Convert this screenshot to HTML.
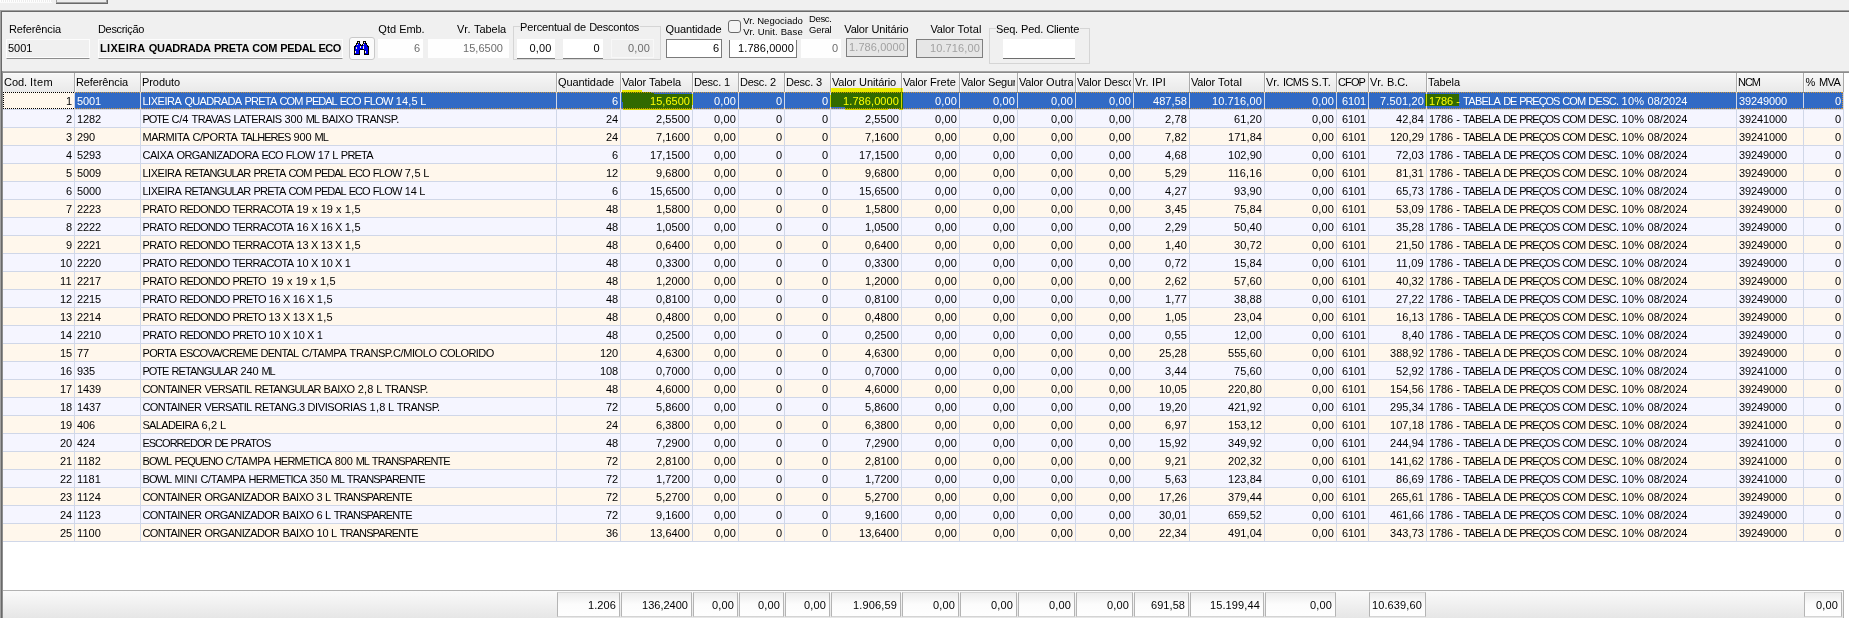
<!DOCTYPE html><html lang="pt-BR"><head><meta charset="utf-8"><title>Itens do Pedido</title><style>
*{box-sizing:border-box;margin:0;padding:0}
html,body{width:1849px;height:618px;overflow:hidden}
body{position:relative;background:#f0f0f0;font:11px "Liberation Sans", sans-serif;color:#000}
.a{position:absolute;white-space:pre}
.lb{position:absolute;white-space:pre;line-height:13px;height:13px;color:#000}
.in{position:absolute;white-space:pre;height:19px;line-height:19px;top:39px}
#grid{position:absolute;left:3px;top:73px;width:1846px;height:517px;background:#fff;overflow:hidden}
.hd{position:absolute;top:0;height:19px;line-height:18px;padding-left:0px;white-space:pre;overflow:hidden;
 background:linear-gradient(#fff 0,#f6f6f6 1.5px,#e9e9e9 100%);border-right:1px solid #aaaaaa;border-left:1px solid #fbfbfb}
.hd .t{display:block;overflow:hidden;margin-right:2px;height:19px}
.r{position:absolute;left:0;width:1841px;height:18px;border-bottom:1px solid #d0d7e8}
.r.o{background:#fff7ec}
.r.e{background:#f5f5ff}
.c{position:absolute;top:0;height:17px;line-height:19px;white-space:pre;overflow:hidden;border-right:1px solid #d0d7e8}
.c.l{padding-left:2px}
.c.r_{text-align:right;padding-right:2px}
.sel .c{background:#316ac5;color:#fff}
.ft{position:absolute;top:592px;height:25px;line-height:24px;text-align:right;padding-right:3px;white-space:pre;
 border:1px solid #b4b4b4;border-top-color:#d4d4d4;border-bottom-color:#d4d4d4;background:linear-gradient(#ebebeb 0%,#f4f4f4 25%,#fcfcfc 50%,#fefefe 100%);}
.hl{position:absolute;background:#ffff00;mix-blend-mode:multiply}
</style></head><body>
<div class="a" style="left:0;top:0;width:52px;height:3px;background:repeating-linear-gradient(90deg,#fff 0 1px,#ececec 1px 2px);border-bottom:1px solid #fbfbfb"></div>
<div class="a" style="left:56px;top:0;width:52px;height:4px;background:#696969"></div>
<div class="a" style="left:56px;top:0;width:51px;height:3px;background:#a0a0a0"></div>
<div class="a" style="left:57px;top:0;width:49px;height:2px;background:#ececec"></div>
<div class="a" style="left:0;top:10px;width:1849px;height:1px;background:#a0a0a0"></div>
<div class="a" style="left:0;top:11px;width:1849px;height:1px;background:#696969"></div>
<div class="a" style="left:0;top:10px;width:1px;height:608px;background:#a0a0a0"></div>
<div class="a" style="left:1px;top:11px;width:1px;height:607px;background:#696969"></div>
<div class="a" style="left:513px;top:26px;width:148px;height:34px;border:1px solid #d5d5d5"></div>
<div class="a" style="left:520px;top:22px;width:120px;height:10px;background:#f0f0f0"></div>
<div class="a" style="left:989px;top:28px;width:101px;height:36px;border:1px solid #d5d5d5"></div>
<div class="a" style="left:996px;top:24px;width:84px;height:10px;background:#f0f0f0"></div>
<div class="lb" style="top:22.6px;font-size:11px;left:9px;"><span style="letter-spacing:-0.12px">Referência</span></div>
<div class="lb" style="top:22.6px;font-size:11px;left:98px;"><span style="letter-spacing:-0.32px">Descrição</span></div>
<div class="lb" style="top:22.6px;font-size:11px;left:378.3px;"><span style="letter-spacing:0.09px">Qtd</span> <span style="letter-spacing:-0.17px">Emb.</span></div>
<div class="lb" style="top:22.6px;font-size:11px;left:457px;"><span style="letter-spacing:0.32px">Vr.</span> <span style="letter-spacing:-0.07px">Tabela</span></div>
<div class="lb" style="top:20.6px;font-size:11px;left:520px;"><span style="letter-spacing:-0.16px">Percentual</span> <span style="letter-spacing:-0.12px">de</span> <span style="letter-spacing:-0.22px">Descontos</span></div>
<div class="lb" style="top:22.6px;font-size:11px;left:665.5px;"><span style="letter-spacing:-0.09px">Quantidade</span></div>
<div class="lb" style="top:14.1px;font-size:9.5px;letter-spacing:0.013px;left:743.3px;">Vr. Negociado</div>
<div class="lb" style="top:25.1px;font-size:9.5px;letter-spacing:0.126px;left:743.3px;">Vr. Unit. Base</div>
<div class="lb" style="top:12.1px;font-size:9.5px;letter-spacing:-0.359px;left:809px;">Desc.</div>
<div class="lb" style="top:23.1px;font-size:9.5px;letter-spacing:-0.147px;left:809px;">Geral</div>
<div class="lb" style="top:22.6px;font-size:11px;left:844.3px;"><span style="letter-spacing:-0.17px">Valor</span> <span style="letter-spacing:-0.11px">Unitário</span></div>
<div class="lb" style="top:22.6px;font-size:11px;left:930.5px;"><span style="letter-spacing:-0.17px">Valor</span> <span style="letter-spacing:0.15px">Total</span></div>
<div class="lb" style="top:22.6px;font-size:11px;left:996px;"><span style="letter-spacing:-0.16px">Seq.</span> <span style="letter-spacing:-0.16px">Ped.</span> <span style="letter-spacing:-0.18px">Cliente</span></div>
<div class="in" style="left:6px;width:84px;padding-left:1px;background:#f0f0f0;border:1px solid #fdfdfd;border-bottom-color:#8c8c8c;box-shadow:inset 0 -1px 0 #fdfdfd;line-height:16px;height:20px">5001</div>
<div class="in" style="left:98px;width:245px;padding-left:1px;background:#f0f0f0;border:1px solid #fdfdfd;border-bottom-color:#8c8c8c;box-shadow:inset 0 -1px 0 #fdfdfd;line-height:16px;height:20px;font-weight:bold;overflow:hidden"><span style="letter-spacing:0.31px">LIXEIRA</span> <span style="letter-spacing:-0.25px">QUADRADA</span> <span style="letter-spacing:-0.23px">PRETA</span> <span style="letter-spacing:-0.23px">COM</span> <span style="letter-spacing:-0.41px">PEDAL</span> <span style="letter-spacing:-0.60px">ECO</span> <span style="letter-spacing:-0.17px">FLOW</span> <span style="letter-spacing:0.60px">14,5</span> <span style="letter-spacing:-0.59px">L</span></div>
<div class="a" style="left:349px;top:37px;width:26px;height:23px;background:#fbfbfb;border:1px solid #c9c9c9;border-radius:3px"></div>
<svg class="a" style="left:354px;top:41px" width="15" height="14" viewBox="0 0 15 14" shape-rendering="crispEdges"><rect x="3" y="0" width="3" height="1" fill="#000"/><rect x="9" y="0" width="3" height="1" fill="#000"/><rect x="3" y="1" width="1" height="1" fill="#000"/><rect x="4" y="1" width="1" height="1" fill="#f4f4c8"/><rect x="5" y="1" width="1" height="1" fill="#000"/><rect x="9" y="1" width="1" height="1" fill="#000"/><rect x="10" y="1" width="1" height="1" fill="#f4f4c8"/><rect x="11" y="1" width="1" height="1" fill="#000"/><rect x="2" y="2" width="2" height="1" fill="#000"/><rect x="4" y="2" width="1" height="1" fill="#0000f0"/><rect x="5" y="2" width="1" height="1" fill="#000"/><rect x="9" y="2" width="1" height="1" fill="#000"/><rect x="10" y="2" width="1" height="1" fill="#0000f0"/><rect x="11" y="2" width="2" height="1" fill="#000"/><rect x="2" y="3" width="1" height="1" fill="#000"/><rect x="3" y="3" width="1" height="1" fill="#f4f4c8"/><rect x="4" y="3" width="2" height="1" fill="#0000f0"/><rect x="6" y="3" width="1" height="1" fill="#000"/><rect x="8" y="3" width="1" height="1" fill="#000"/><rect x="9" y="3" width="1" height="1" fill="#f4f4c8"/><rect x="10" y="3" width="2" height="1" fill="#0000f0"/><rect x="12" y="3" width="1" height="1" fill="#000"/><rect x="1" y="4" width="1" height="1" fill="#000"/><rect x="2" y="4" width="4" height="1" fill="#0000f0"/><rect x="6" y="4" width="3" height="1" fill="#000"/><rect x="9" y="4" width="4" height="1" fill="#0000f0"/><rect x="13" y="4" width="1" height="1" fill="#000"/><rect x="0" y="5" width="2" height="1" fill="#000"/><rect x="2" y="5" width="4" height="1" fill="#0000f0"/><rect x="6" y="5" width="1" height="1" fill="#f4f4c8"/><rect x="7" y="5" width="2" height="1" fill="#0000f0"/><rect x="9" y="5" width="1" height="1" fill="#f4f4c8"/><rect x="10" y="5" width="3" height="1" fill="#0000f0"/><rect x="13" y="5" width="2" height="1" fill="#000"/><rect x="0" y="6" width="1" height="1" fill="#000"/><rect x="1" y="6" width="1" height="1" fill="#0000f0"/><rect x="2" y="6" width="1" height="1" fill="#f4f4c8"/><rect x="3" y="6" width="3" height="1" fill="#0000f0"/><rect x="6" y="6" width="1" height="1" fill="#f4f4c8"/><rect x="7" y="6" width="2" height="1" fill="#0000f0"/><rect x="9" y="6" width="1" height="1" fill="#f4f4c8"/><rect x="10" y="6" width="4" height="1" fill="#0000f0"/><rect x="14" y="6" width="1" height="1" fill="#000"/><rect x="0" y="7" width="1" height="1" fill="#000"/><rect x="1" y="7" width="1" height="1" fill="#0000f0"/><rect x="2" y="7" width="1" height="1" fill="#f4f4c8"/><rect x="3" y="7" width="6" height="1" fill="#0000f0"/><rect x="9" y="7" width="1" height="1" fill="#f4f4c8"/><rect x="10" y="7" width="4" height="1" fill="#0000f0"/><rect x="14" y="7" width="1" height="1" fill="#000"/><rect x="0" y="8" width="1" height="1" fill="#000"/><rect x="1" y="8" width="5" height="1" fill="#0000f0"/><rect x="6" y="8" width="4" height="1" fill="#000"/><rect x="10" y="8" width="4" height="1" fill="#0000f0"/><rect x="14" y="8" width="1" height="1" fill="#000"/><rect x="0" y="9" width="1" height="1" fill="#000"/><rect x="1" y="9" width="4" height="1" fill="#0000f0"/><rect x="5" y="9" width="1" height="1" fill="#000"/><rect x="10" y="9" width="1" height="1" fill="#000"/><rect x="11" y="9" width="3" height="1" fill="#0000f0"/><rect x="14" y="9" width="1" height="1" fill="#000"/><rect x="0" y="10" width="1" height="1" fill="#000"/><rect x="1" y="10" width="1" height="1" fill="#f4f4c8"/><rect x="2" y="10" width="3" height="1" fill="#0000f0"/><rect x="5" y="10" width="1" height="1" fill="#000"/><rect x="10" y="10" width="1" height="1" fill="#000"/><rect x="11" y="10" width="1" height="1" fill="#f4f4c8"/><rect x="12" y="10" width="2" height="1" fill="#0000f0"/><rect x="14" y="10" width="1" height="1" fill="#000"/><rect x="0" y="11" width="1" height="1" fill="#000"/><rect x="1" y="11" width="1" height="1" fill="#f4f4c8"/><rect x="2" y="11" width="3" height="1" fill="#0000f0"/><rect x="5" y="11" width="1" height="1" fill="#000"/><rect x="10" y="11" width="1" height="1" fill="#000"/><rect x="11" y="11" width="1" height="1" fill="#f4f4c8"/><rect x="12" y="11" width="2" height="1" fill="#0000f0"/><rect x="14" y="11" width="1" height="1" fill="#000"/><rect x="0" y="12" width="1" height="1" fill="#000"/><rect x="1" y="12" width="4" height="1" fill="#0000f0"/><rect x="5" y="12" width="1" height="1" fill="#000"/><rect x="10" y="12" width="1" height="1" fill="#000"/><rect x="11" y="12" width="3" height="1" fill="#0000f0"/><rect x="14" y="12" width="1" height="1" fill="#000"/><rect x="0" y="13" width="6" height="1" fill="#000"/><rect x="10" y="13" width="5" height="1" fill="#000"/></svg>
<div class="in" style="left:378px;width:45px;top:39px;height:19px;line-height:18px;text-align:right;padding-right:3px;color:#6d6d6d;background:#fefefe"><span style="letter-spacing:-0.12px">6</span></div>
<div class="in" style="left:428px;width:81px;top:39px;height:19px;line-height:18px;text-align:right;padding-right:6px;color:#6d6d6d;background:#fefefe"><span style="letter-spacing:0.03px">15,6500</span></div>
<div class="in" style="left:517px;width:38px;top:39px;height:20px;line-height:18px;text-align:right;padding-right:3.5px;color:#000;background:#fff;border-bottom:1px solid #7a7a7a"><span style="letter-spacing:0.14px">0,00</span></div>
<div class="in" style="left:563px;width:40px;top:39px;height:20px;line-height:18px;text-align:right;padding-right:3.5px;color:#000;background:#fff;border-bottom:1px solid #7a7a7a"><span style="letter-spacing:-0.12px">0</span></div>
<div class="in" style="left:611px;width:43px;top:39px;height:19px;line-height:16px;text-align:right;padding-right:3px;color:#6d6d6d;background:#f0f0f0;border:1px solid #f8f8f8"><span style="letter-spacing:0.14px">0,00</span></div>
<div class="in" style="left:666px;width:56px;top:39px;height:19px;line-height:16px;text-align:right;padding-right:2px;color:#000;background:#fff;border:1px solid #7a7a7a"><span style="letter-spacing:-0.12px">6</span></div>
<div class="in" style="left:729px;width:68px;top:40px;height:18px;line-height:16px;text-align:right;padding-right:2px;color:#000;background:#fff;border:1px solid #7a7a7a;border-top:none"><span style="letter-spacing:0.09px">1.786,0000</span></div>
<div class="in" style="left:801px;width:40px;top:39px;height:19px;line-height:18px;text-align:right;padding-right:3px;color:#6d6d6d;background:#fefefe"><span style="letter-spacing:-0.12px">0</span></div>
<div class="in" style="left:846px;width:62px;top:38px;height:19px;line-height:16px;text-align:right;padding-right:2px;color:#a2a2a2;background:#e6e6e6;border:1px solid #7f7f7f"><span style="letter-spacing:0.09px">1.786,0000</span></div>
<div class="in" style="left:916px;width:67px;top:39px;height:19px;line-height:16px;text-align:right;padding-right:2px;color:#a2a2a2;background:#e6e6e6;border:1px solid #7f7f7f"><span style="letter-spacing:0.12px">10.716,00</span></div>
<div class="in" style="left:1003px;width:72px;top:39px;height:20px;line-height:18px;text-align:right;padding-right:2px;color:#000;background:#fff;border-bottom:1px solid #6d6d6d"></div>
<div class="a" style="left:728px;top:20px;width:13px;height:13px;background:#f4f4f4;border:1px solid #6a6a6a;border-radius:3px"></div>
<div class="a" style="left:2px;top:71px;width:1847px;height:1px;background:#a4a4a4"></div>
<div class="a" style="left:2px;top:72px;width:1847px;height:1px;background:#8c8c8c"></div>
<div class="a" style="left:2px;top:71px;width:1px;height:547px;background:#8e8e8e"></div>
<div id="grid">
<div class="hd" style="left:0px;width:72px"><span class="t"><span style="letter-spacing:-0.06px">Cod.</span> <span style="letter-spacing:0.40px">Item</span></span></div>
<div class="hd" style="left:72px;width:66px"><span class="t"><span style="letter-spacing:-0.12px">Referência</span></span></div>
<div class="hd" style="left:138px;width:416px"><span class="t"><span style="letter-spacing:-0.08px">Produto</span></span></div>
<div class="hd" style="left:554px;width:64px"><span class="t"><span style="letter-spacing:-0.09px">Quantidade</span></span></div>
<div class="hd" style="left:618px;width:72px"><span class="t"><span style="letter-spacing:-0.17px">Valor</span> <span style="letter-spacing:-0.07px">Tabela</span></span></div>
<div class="hd" style="left:690px;width:46px"><span class="t"><span style="letter-spacing:-0.23px">Desc.</span> <span style="letter-spacing:-0.12px">1</span></span></div>
<div class="hd" style="left:736px;width:46px"><span class="t"><span style="letter-spacing:-0.23px">Desc.</span> <span style="letter-spacing:-0.12px">2</span></span></div>
<div class="hd" style="left:782px;width:46px"><span class="t"><span style="letter-spacing:-0.23px">Desc.</span> <span style="letter-spacing:-0.12px">3</span></span></div>
<div class="hd" style="left:828px;width:71px"><span class="t"><span style="letter-spacing:-0.17px">Valor</span> <span style="letter-spacing:-0.11px">Unitário</span></span></div>
<div class="hd" style="left:899px;width:58px"><span class="t"><span style="letter-spacing:-0.17px">Valor</span> <span style="letter-spacing:0.06px">Frete</span></span></div>
<div class="hd" style="left:957px;width:58px"><span class="t"><span style="letter-spacing:-0.17px">Valor</span> <span style="letter-spacing:-0.25px">Seguro</span></span></div>
<div class="hd" style="left:1015px;width:58px"><span class="t"><span style="letter-spacing:-0.17px">Valor</span> <span style="letter-spacing:-0.00px">Outras</span></span></div>
<div class="hd" style="left:1073px;width:58px"><span class="t"><span style="letter-spacing:-0.17px">Valor</span> <span style="letter-spacing:-0.19px">Desconto</span></span></div>
<div class="hd" style="left:1131px;width:56px"><span class="t"><span style="letter-spacing:0.32px">Vr.</span> <span style="letter-spacing:0.18px">IPI</span></span></div>
<div class="hd" style="left:1187px;width:75px"><span class="t"><span style="letter-spacing:-0.17px">Valor</span> <span style="letter-spacing:0.15px">Total</span></span></div>
<div class="hd" style="left:1262px;width:72px"><span class="t"><span style="letter-spacing:0.32px">Vr.</span> <span style="letter-spacing:-0.62px">ICMS</span> <span style="letter-spacing:0.26px">S.T.</span></span></div>
<div class="hd" style="left:1334px;width:32px"><span class="t"><span style="letter-spacing:-0.89px">CFOP</span></span></div>
<div class="hd" style="left:1366px;width:58px"><span class="t"><span style="letter-spacing:0.32px">Vr.</span> <span style="letter-spacing:-0.10px">B.C.</span></span></div>
<div class="hd" style="left:1424px;width:310px"><span class="t"><span style="letter-spacing:-0.07px">Tabela</span></span></div>
<div class="hd" style="left:1734px;width:67px"><span class="t"><span style="letter-spacing:-1.02px">NCM</span></span></div>
<div class="hd" style="left:1801px;width:40px"><span class="t"><span style="letter-spacing:0.61px;margin-left:0.61px">%</span> <span style="letter-spacing:-0.68px">MVA</span></span></div>
<div class="r o sel" style="top:19px">
<div class="c r_" style="left:0px;width:72px;background:#fff7ec;color:#000;"><span style="letter-spacing:-0.12px">1</span></div>
<div class="c l" style="left:72px;width:66px;"><span style="letter-spacing:-0.12px">5001</span></div>
<div class="c l" style="left:138px;width:416px;padding-left:1.4px;"><span style="letter-spacing:-0.46px">LIXEIRA</span> <span style="letter-spacing:-0.67px">QUADRADA</span> <span style="letter-spacing:-0.77px">PRETA</span> <span style="letter-spacing:-0.89px">COM</span> <span style="letter-spacing:-1.02px">PEDAL</span> <span style="letter-spacing:-0.95px">ECO</span> <span style="letter-spacing:-0.70px">FLOW</span> <span style="letter-spacing:0.14px">14,5</span> <span style="letter-spacing:-0.56px;margin-left:-0.56px">L</span></div>
<div class="c r_" style="left:554px;width:64px;"><span style="letter-spacing:-0.12px">6</span></div>
<div class="c r_" style="left:618px;width:72px;"><span style="letter-spacing:0.03px">15,6500</span></div>
<div class="c r_" style="left:690px;width:46px;"><span style="letter-spacing:0.14px">0,00</span></div>
<div class="c r_" style="left:736px;width:46px;"><span style="letter-spacing:-0.12px">0</span></div>
<div class="c r_" style="left:782px;width:46px;"><span style="letter-spacing:-0.12px">0</span></div>
<div class="c r_" style="left:828px;width:71px;"><span style="letter-spacing:0.09px">1.786,0000</span></div>
<div class="c r_" style="left:899px;width:58px;"><span style="letter-spacing:0.14px">0,00</span></div>
<div class="c r_" style="left:957px;width:58px;"><span style="letter-spacing:0.14px">0,00</span></div>
<div class="c r_" style="left:1015px;width:58px;"><span style="letter-spacing:0.14px">0,00</span></div>
<div class="c r_" style="left:1073px;width:58px;"><span style="letter-spacing:0.14px">0,00</span></div>
<div class="c r_" style="left:1131px;width:56px;"><span style="letter-spacing:0.06px">487,58</span></div>
<div class="c r_" style="left:1187px;width:75px;"><span style="letter-spacing:0.12px">10.716,00</span></div>
<div class="c r_" style="left:1262px;width:72px;"><span style="letter-spacing:0.14px">0,00</span></div>
<div class="c r_" style="left:1334px;width:32px;"><span style="letter-spacing:-0.12px">6101</span></div>
<div class="c r_" style="left:1366px;width:58px;"><span style="letter-spacing:0.15px">7.501,20</span></div>
<div class="c l" style="left:1424px;width:310px;padding-left:2px;"><span style="letter-spacing:-0.12px">1786</span> <span style="letter-spacing:0.16px;margin-left:0.16px">-</span> <span style="letter-spacing:-0.73px">TABELA</span> <span style="letter-spacing:-1.14px">DE</span> <span style="letter-spacing:-1.08px">PREÇOS</span> <span style="letter-spacing:-0.89px">COM</span> <span style="letter-spacing:-0.72px">DESC.</span> <span style="letter-spacing:0.32px">10%</span> <span style="letter-spacing:0.03px">08/2024</span></div>
<div class="c l" style="left:1734px;width:67px;"><span style="letter-spacing:-0.12px">39249000</span></div>
<div class="c r_" style="left:1801px;width:40px;"><span style="letter-spacing:-0.12px">0</span></div>
</div>
<div class="r e" style="top:37px">
<div class="c r_" style="left:0px;width:72px;"><span style="letter-spacing:-0.12px">2</span></div>
<div class="c l" style="left:72px;width:66px;"><span style="letter-spacing:-0.12px">1282</span></div>
<div class="c l" style="left:138px;width:416px;padding-left:1.4px;"><span style="letter-spacing:-0.99px">POTE</span> <span style="letter-spacing:-0.04px">C/4</span> <span style="letter-spacing:-0.57px">TRAVAS</span> <span style="letter-spacing:-0.55px">LATERAIS</span> <span style="letter-spacing:-0.12px">300</span> <span style="letter-spacing:-1.14px">ML</span> <span style="letter-spacing:-0.53px">BAIXO</span> <span style="letter-spacing:-0.47px">TRANSP.</span></div>
<div class="c r_" style="left:554px;width:64px;"><span style="letter-spacing:-0.12px">24</span></div>
<div class="c r_" style="left:618px;width:72px;"><span style="letter-spacing:0.06px">2,5500</span></div>
<div class="c r_" style="left:690px;width:46px;"><span style="letter-spacing:0.14px">0,00</span></div>
<div class="c r_" style="left:736px;width:46px;"><span style="letter-spacing:-0.12px">0</span></div>
<div class="c r_" style="left:782px;width:46px;"><span style="letter-spacing:-0.12px">0</span></div>
<div class="c r_" style="left:828px;width:71px;"><span style="letter-spacing:0.06px">2,5500</span></div>
<div class="c r_" style="left:899px;width:58px;"><span style="letter-spacing:0.14px">0,00</span></div>
<div class="c r_" style="left:957px;width:58px;"><span style="letter-spacing:0.14px">0,00</span></div>
<div class="c r_" style="left:1015px;width:58px;"><span style="letter-spacing:0.14px">0,00</span></div>
<div class="c r_" style="left:1073px;width:58px;"><span style="letter-spacing:0.14px">0,00</span></div>
<div class="c r_" style="left:1131px;width:56px;"><span style="letter-spacing:0.14px">2,78</span></div>
<div class="c r_" style="left:1187px;width:75px;"><span style="letter-spacing:0.09px">61,20</span></div>
<div class="c r_" style="left:1262px;width:72px;"><span style="letter-spacing:0.14px">0,00</span></div>
<div class="c r_" style="left:1334px;width:32px;"><span style="letter-spacing:-0.12px">6101</span></div>
<div class="c r_" style="left:1366px;width:58px;"><span style="letter-spacing:0.09px">42,84</span></div>
<div class="c l" style="left:1424px;width:310px;padding-left:2px;"><span style="letter-spacing:-0.12px">1786</span> <span style="letter-spacing:0.16px;margin-left:0.16px">-</span> <span style="letter-spacing:-0.73px">TABELA</span> <span style="letter-spacing:-1.14px">DE</span> <span style="letter-spacing:-1.08px">PREÇOS</span> <span style="letter-spacing:-0.89px">COM</span> <span style="letter-spacing:-0.72px">DESC.</span> <span style="letter-spacing:0.32px">10%</span> <span style="letter-spacing:0.03px">08/2024</span></div>
<div class="c l" style="left:1734px;width:67px;"><span style="letter-spacing:-0.12px">39241000</span></div>
<div class="c r_" style="left:1801px;width:40px;"><span style="letter-spacing:-0.12px">0</span></div>
</div>
<div class="r o" style="top:55px">
<div class="c r_" style="left:0px;width:72px;"><span style="letter-spacing:-0.12px">3</span></div>
<div class="c l" style="left:72px;width:66px;"><span style="letter-spacing:-0.12px">290</span></div>
<div class="c l" style="left:138px;width:416px;padding-left:1.4px;"><span style="letter-spacing:-0.42px">MARMITA</span> <span style="letter-spacing:-0.41px">C/PORTA</span> <span style="letter-spacing:-0.91px">TALHERES</span> <span style="letter-spacing:-0.12px">900</span> <span style="letter-spacing:-1.14px">ML</span></div>
<div class="c r_" style="left:554px;width:64px;"><span style="letter-spacing:-0.12px">24</span></div>
<div class="c r_" style="left:618px;width:72px;"><span style="letter-spacing:0.06px">7,1600</span></div>
<div class="c r_" style="left:690px;width:46px;"><span style="letter-spacing:0.14px">0,00</span></div>
<div class="c r_" style="left:736px;width:46px;"><span style="letter-spacing:-0.12px">0</span></div>
<div class="c r_" style="left:782px;width:46px;"><span style="letter-spacing:-0.12px">0</span></div>
<div class="c r_" style="left:828px;width:71px;"><span style="letter-spacing:0.06px">7,1600</span></div>
<div class="c r_" style="left:899px;width:58px;"><span style="letter-spacing:0.14px">0,00</span></div>
<div class="c r_" style="left:957px;width:58px;"><span style="letter-spacing:0.14px">0,00</span></div>
<div class="c r_" style="left:1015px;width:58px;"><span style="letter-spacing:0.14px">0,00</span></div>
<div class="c r_" style="left:1073px;width:58px;"><span style="letter-spacing:0.14px">0,00</span></div>
<div class="c r_" style="left:1131px;width:56px;"><span style="letter-spacing:0.14px">7,82</span></div>
<div class="c r_" style="left:1187px;width:75px;"><span style="letter-spacing:0.06px">171,84</span></div>
<div class="c r_" style="left:1262px;width:72px;"><span style="letter-spacing:0.14px">0,00</span></div>
<div class="c r_" style="left:1334px;width:32px;"><span style="letter-spacing:-0.12px">6101</span></div>
<div class="c r_" style="left:1366px;width:58px;"><span style="letter-spacing:0.06px">120,29</span></div>
<div class="c l" style="left:1424px;width:310px;padding-left:2px;"><span style="letter-spacing:-0.12px">1786</span> <span style="letter-spacing:0.16px;margin-left:0.16px">-</span> <span style="letter-spacing:-0.73px">TABELA</span> <span style="letter-spacing:-1.14px">DE</span> <span style="letter-spacing:-1.08px">PREÇOS</span> <span style="letter-spacing:-0.89px">COM</span> <span style="letter-spacing:-0.72px">DESC.</span> <span style="letter-spacing:0.32px">10%</span> <span style="letter-spacing:0.03px">08/2024</span></div>
<div class="c l" style="left:1734px;width:67px;"><span style="letter-spacing:-0.12px">39241000</span></div>
<div class="c r_" style="left:1801px;width:40px;"><span style="letter-spacing:-0.12px">0</span></div>
</div>
<div class="r e" style="top:73px">
<div class="c r_" style="left:0px;width:72px;"><span style="letter-spacing:-0.12px">4</span></div>
<div class="c l" style="left:72px;width:66px;"><span style="letter-spacing:-0.12px">5293</span></div>
<div class="c l" style="left:138px;width:416px;padding-left:1.4px;"><span style="letter-spacing:-0.40px">CAIXA</span> <span style="letter-spacing:-0.60px">ORGANIZADORA</span> <span style="letter-spacing:-0.95px">ECO</span> <span style="letter-spacing:-0.70px">FLOW</span> <span style="letter-spacing:-0.12px">17</span> <span style="letter-spacing:-0.56px;margin-left:-0.56px">L</span> <span style="letter-spacing:-0.77px">PRETA</span></div>
<div class="c r_" style="left:554px;width:64px;"><span style="letter-spacing:-0.12px">6</span></div>
<div class="c r_" style="left:618px;width:72px;"><span style="letter-spacing:0.03px">17,1500</span></div>
<div class="c r_" style="left:690px;width:46px;"><span style="letter-spacing:0.14px">0,00</span></div>
<div class="c r_" style="left:736px;width:46px;"><span style="letter-spacing:-0.12px">0</span></div>
<div class="c r_" style="left:782px;width:46px;"><span style="letter-spacing:-0.12px">0</span></div>
<div class="c r_" style="left:828px;width:71px;"><span style="letter-spacing:0.03px">17,1500</span></div>
<div class="c r_" style="left:899px;width:58px;"><span style="letter-spacing:0.14px">0,00</span></div>
<div class="c r_" style="left:957px;width:58px;"><span style="letter-spacing:0.14px">0,00</span></div>
<div class="c r_" style="left:1015px;width:58px;"><span style="letter-spacing:0.14px">0,00</span></div>
<div class="c r_" style="left:1073px;width:58px;"><span style="letter-spacing:0.14px">0,00</span></div>
<div class="c r_" style="left:1131px;width:56px;"><span style="letter-spacing:0.14px">4,68</span></div>
<div class="c r_" style="left:1187px;width:75px;"><span style="letter-spacing:0.06px">102,90</span></div>
<div class="c r_" style="left:1262px;width:72px;"><span style="letter-spacing:0.14px">0,00</span></div>
<div class="c r_" style="left:1334px;width:32px;"><span style="letter-spacing:-0.12px">6101</span></div>
<div class="c r_" style="left:1366px;width:58px;"><span style="letter-spacing:0.09px">72,03</span></div>
<div class="c l" style="left:1424px;width:310px;padding-left:2px;"><span style="letter-spacing:-0.12px">1786</span> <span style="letter-spacing:0.16px;margin-left:0.16px">-</span> <span style="letter-spacing:-0.73px">TABELA</span> <span style="letter-spacing:-1.14px">DE</span> <span style="letter-spacing:-1.08px">PREÇOS</span> <span style="letter-spacing:-0.89px">COM</span> <span style="letter-spacing:-0.72px">DESC.</span> <span style="letter-spacing:0.32px">10%</span> <span style="letter-spacing:0.03px">08/2024</span></div>
<div class="c l" style="left:1734px;width:67px;"><span style="letter-spacing:-0.12px">39249000</span></div>
<div class="c r_" style="left:1801px;width:40px;"><span style="letter-spacing:-0.12px">0</span></div>
</div>
<div class="r o" style="top:91px">
<div class="c r_" style="left:0px;width:72px;"><span style="letter-spacing:-0.12px">5</span></div>
<div class="c l" style="left:72px;width:66px;"><span style="letter-spacing:-0.12px">5009</span></div>
<div class="c l" style="left:138px;width:416px;padding-left:1.4px;"><span style="letter-spacing:-0.46px">LIXEIRA</span> <span style="letter-spacing:-0.84px">RETANGULAR</span> <span style="letter-spacing:-0.77px">PRETA</span> <span style="letter-spacing:-0.89px">COM</span> <span style="letter-spacing:-1.02px">PEDAL</span> <span style="letter-spacing:-0.95px">ECO</span> <span style="letter-spacing:-0.70px">FLOW</span> <span style="letter-spacing:0.23px">7,5</span> <span style="letter-spacing:-0.56px;margin-left:-0.56px">L</span></div>
<div class="c r_" style="left:554px;width:64px;"><span style="letter-spacing:-0.12px">12</span></div>
<div class="c r_" style="left:618px;width:72px;"><span style="letter-spacing:0.06px">9,6800</span></div>
<div class="c r_" style="left:690px;width:46px;"><span style="letter-spacing:0.14px">0,00</span></div>
<div class="c r_" style="left:736px;width:46px;"><span style="letter-spacing:-0.12px">0</span></div>
<div class="c r_" style="left:782px;width:46px;"><span style="letter-spacing:-0.12px">0</span></div>
<div class="c r_" style="left:828px;width:71px;"><span style="letter-spacing:0.06px">9,6800</span></div>
<div class="c r_" style="left:899px;width:58px;"><span style="letter-spacing:0.14px">0,00</span></div>
<div class="c r_" style="left:957px;width:58px;"><span style="letter-spacing:0.14px">0,00</span></div>
<div class="c r_" style="left:1015px;width:58px;"><span style="letter-spacing:0.14px">0,00</span></div>
<div class="c r_" style="left:1073px;width:58px;"><span style="letter-spacing:0.14px">0,00</span></div>
<div class="c r_" style="left:1131px;width:56px;"><span style="letter-spacing:0.14px">5,29</span></div>
<div class="c r_" style="left:1187px;width:75px;"><span style="letter-spacing:0.20px">116,16</span></div>
<div class="c r_" style="left:1262px;width:72px;"><span style="letter-spacing:0.14px">0,00</span></div>
<div class="c r_" style="left:1334px;width:32px;"><span style="letter-spacing:-0.12px">6101</span></div>
<div class="c r_" style="left:1366px;width:58px;"><span style="letter-spacing:0.09px">81,31</span></div>
<div class="c l" style="left:1424px;width:310px;padding-left:2px;"><span style="letter-spacing:-0.12px">1786</span> <span style="letter-spacing:0.16px;margin-left:0.16px">-</span> <span style="letter-spacing:-0.73px">TABELA</span> <span style="letter-spacing:-1.14px">DE</span> <span style="letter-spacing:-1.08px">PREÇOS</span> <span style="letter-spacing:-0.89px">COM</span> <span style="letter-spacing:-0.72px">DESC.</span> <span style="letter-spacing:0.32px">10%</span> <span style="letter-spacing:0.03px">08/2024</span></div>
<div class="c l" style="left:1734px;width:67px;"><span style="letter-spacing:-0.12px">39249000</span></div>
<div class="c r_" style="left:1801px;width:40px;"><span style="letter-spacing:-0.12px">0</span></div>
</div>
<div class="r e" style="top:109px">
<div class="c r_" style="left:0px;width:72px;"><span style="letter-spacing:-0.12px">6</span></div>
<div class="c l" style="left:72px;width:66px;"><span style="letter-spacing:-0.12px">5000</span></div>
<div class="c l" style="left:138px;width:416px;padding-left:1.4px;"><span style="letter-spacing:-0.46px">LIXEIRA</span> <span style="letter-spacing:-0.84px">RETANGULAR</span> <span style="letter-spacing:-0.77px">PRETA</span> <span style="letter-spacing:-0.89px">COM</span> <span style="letter-spacing:-1.02px">PEDAL</span> <span style="letter-spacing:-0.95px">ECO</span> <span style="letter-spacing:-0.70px">FLOW</span> <span style="letter-spacing:-0.12px">14</span> <span style="letter-spacing:-0.56px;margin-left:-0.56px">L</span></div>
<div class="c r_" style="left:554px;width:64px;"><span style="letter-spacing:-0.12px">6</span></div>
<div class="c r_" style="left:618px;width:72px;"><span style="letter-spacing:0.03px">15,6500</span></div>
<div class="c r_" style="left:690px;width:46px;"><span style="letter-spacing:0.14px">0,00</span></div>
<div class="c r_" style="left:736px;width:46px;"><span style="letter-spacing:-0.12px">0</span></div>
<div class="c r_" style="left:782px;width:46px;"><span style="letter-spacing:-0.12px">0</span></div>
<div class="c r_" style="left:828px;width:71px;"><span style="letter-spacing:0.03px">15,6500</span></div>
<div class="c r_" style="left:899px;width:58px;"><span style="letter-spacing:0.14px">0,00</span></div>
<div class="c r_" style="left:957px;width:58px;"><span style="letter-spacing:0.14px">0,00</span></div>
<div class="c r_" style="left:1015px;width:58px;"><span style="letter-spacing:0.14px">0,00</span></div>
<div class="c r_" style="left:1073px;width:58px;"><span style="letter-spacing:0.14px">0,00</span></div>
<div class="c r_" style="left:1131px;width:56px;"><span style="letter-spacing:0.14px">4,27</span></div>
<div class="c r_" style="left:1187px;width:75px;"><span style="letter-spacing:0.09px">93,90</span></div>
<div class="c r_" style="left:1262px;width:72px;"><span style="letter-spacing:0.14px">0,00</span></div>
<div class="c r_" style="left:1334px;width:32px;"><span style="letter-spacing:-0.12px">6101</span></div>
<div class="c r_" style="left:1366px;width:58px;"><span style="letter-spacing:0.09px">65,73</span></div>
<div class="c l" style="left:1424px;width:310px;padding-left:2px;"><span style="letter-spacing:-0.12px">1786</span> <span style="letter-spacing:0.16px;margin-left:0.16px">-</span> <span style="letter-spacing:-0.73px">TABELA</span> <span style="letter-spacing:-1.14px">DE</span> <span style="letter-spacing:-1.08px">PREÇOS</span> <span style="letter-spacing:-0.89px">COM</span> <span style="letter-spacing:-0.72px">DESC.</span> <span style="letter-spacing:0.32px">10%</span> <span style="letter-spacing:0.03px">08/2024</span></div>
<div class="c l" style="left:1734px;width:67px;"><span style="letter-spacing:-0.12px">39249000</span></div>
<div class="c r_" style="left:1801px;width:40px;"><span style="letter-spacing:-0.12px">0</span></div>
</div>
<div class="r o" style="top:127px">
<div class="c r_" style="left:0px;width:72px;"><span style="letter-spacing:-0.12px">7</span></div>
<div class="c l" style="left:72px;width:66px;"><span style="letter-spacing:-0.12px">2223</span></div>
<div class="c l" style="left:138px;width:416px;padding-left:1.4px;"><span style="letter-spacing:-0.58px">PRATO</span> <span style="letter-spacing:-0.89px">REDONDO</span> <span style="letter-spacing:-0.67px">TERRACOTA</span> <span style="letter-spacing:-0.12px">19</span> <span style="letter-spacing:0.25px;margin-left:0.25px">x</span> <span style="letter-spacing:-0.12px">19</span> <span style="letter-spacing:0.25px;margin-left:0.25px">x</span> <span style="letter-spacing:0.23px">1,5</span></div>
<div class="c r_" style="left:554px;width:64px;"><span style="letter-spacing:-0.12px">48</span></div>
<div class="c r_" style="left:618px;width:72px;"><span style="letter-spacing:0.06px">1,5800</span></div>
<div class="c r_" style="left:690px;width:46px;"><span style="letter-spacing:0.14px">0,00</span></div>
<div class="c r_" style="left:736px;width:46px;"><span style="letter-spacing:-0.12px">0</span></div>
<div class="c r_" style="left:782px;width:46px;"><span style="letter-spacing:-0.12px">0</span></div>
<div class="c r_" style="left:828px;width:71px;"><span style="letter-spacing:0.06px">1,5800</span></div>
<div class="c r_" style="left:899px;width:58px;"><span style="letter-spacing:0.14px">0,00</span></div>
<div class="c r_" style="left:957px;width:58px;"><span style="letter-spacing:0.14px">0,00</span></div>
<div class="c r_" style="left:1015px;width:58px;"><span style="letter-spacing:0.14px">0,00</span></div>
<div class="c r_" style="left:1073px;width:58px;"><span style="letter-spacing:0.14px">0,00</span></div>
<div class="c r_" style="left:1131px;width:56px;"><span style="letter-spacing:0.14px">3,45</span></div>
<div class="c r_" style="left:1187px;width:75px;"><span style="letter-spacing:0.09px">75,84</span></div>
<div class="c r_" style="left:1262px;width:72px;"><span style="letter-spacing:0.14px">0,00</span></div>
<div class="c r_" style="left:1334px;width:32px;"><span style="letter-spacing:-0.12px">6101</span></div>
<div class="c r_" style="left:1366px;width:58px;"><span style="letter-spacing:0.09px">53,09</span></div>
<div class="c l" style="left:1424px;width:310px;padding-left:2px;"><span style="letter-spacing:-0.12px">1786</span> <span style="letter-spacing:0.16px;margin-left:0.16px">-</span> <span style="letter-spacing:-0.73px">TABELA</span> <span style="letter-spacing:-1.14px">DE</span> <span style="letter-spacing:-1.08px">PREÇOS</span> <span style="letter-spacing:-0.89px">COM</span> <span style="letter-spacing:-0.72px">DESC.</span> <span style="letter-spacing:0.32px">10%</span> <span style="letter-spacing:0.03px">08/2024</span></div>
<div class="c l" style="left:1734px;width:67px;"><span style="letter-spacing:-0.12px">39249000</span></div>
<div class="c r_" style="left:1801px;width:40px;"><span style="letter-spacing:-0.12px">0</span></div>
</div>
<div class="r e" style="top:145px">
<div class="c r_" style="left:0px;width:72px;"><span style="letter-spacing:-0.12px">8</span></div>
<div class="c l" style="left:72px;width:66px;"><span style="letter-spacing:-0.12px">2222</span></div>
<div class="c l" style="left:138px;width:416px;padding-left:1.4px;"><span style="letter-spacing:-0.58px">PRATO</span> <span style="letter-spacing:-0.89px">REDONDO</span> <span style="letter-spacing:-0.67px">TERRACOTA</span> <span style="letter-spacing:-0.12px">16</span> <span style="letter-spacing:-0.67px;margin-left:-0.67px">X</span> <span style="letter-spacing:-0.12px">16</span> <span style="letter-spacing:-0.67px;margin-left:-0.67px">X</span> <span style="letter-spacing:0.23px">1,5</span></div>
<div class="c r_" style="left:554px;width:64px;"><span style="letter-spacing:-0.12px">48</span></div>
<div class="c r_" style="left:618px;width:72px;"><span style="letter-spacing:0.06px">1,0500</span></div>
<div class="c r_" style="left:690px;width:46px;"><span style="letter-spacing:0.14px">0,00</span></div>
<div class="c r_" style="left:736px;width:46px;"><span style="letter-spacing:-0.12px">0</span></div>
<div class="c r_" style="left:782px;width:46px;"><span style="letter-spacing:-0.12px">0</span></div>
<div class="c r_" style="left:828px;width:71px;"><span style="letter-spacing:0.06px">1,0500</span></div>
<div class="c r_" style="left:899px;width:58px;"><span style="letter-spacing:0.14px">0,00</span></div>
<div class="c r_" style="left:957px;width:58px;"><span style="letter-spacing:0.14px">0,00</span></div>
<div class="c r_" style="left:1015px;width:58px;"><span style="letter-spacing:0.14px">0,00</span></div>
<div class="c r_" style="left:1073px;width:58px;"><span style="letter-spacing:0.14px">0,00</span></div>
<div class="c r_" style="left:1131px;width:56px;"><span style="letter-spacing:0.14px">2,29</span></div>
<div class="c r_" style="left:1187px;width:75px;"><span style="letter-spacing:0.09px">50,40</span></div>
<div class="c r_" style="left:1262px;width:72px;"><span style="letter-spacing:0.14px">0,00</span></div>
<div class="c r_" style="left:1334px;width:32px;"><span style="letter-spacing:-0.12px">6101</span></div>
<div class="c r_" style="left:1366px;width:58px;"><span style="letter-spacing:0.09px">35,28</span></div>
<div class="c l" style="left:1424px;width:310px;padding-left:2px;"><span style="letter-spacing:-0.12px">1786</span> <span style="letter-spacing:0.16px;margin-left:0.16px">-</span> <span style="letter-spacing:-0.73px">TABELA</span> <span style="letter-spacing:-1.14px">DE</span> <span style="letter-spacing:-1.08px">PREÇOS</span> <span style="letter-spacing:-0.89px">COM</span> <span style="letter-spacing:-0.72px">DESC.</span> <span style="letter-spacing:0.32px">10%</span> <span style="letter-spacing:0.03px">08/2024</span></div>
<div class="c l" style="left:1734px;width:67px;"><span style="letter-spacing:-0.12px">39249000</span></div>
<div class="c r_" style="left:1801px;width:40px;"><span style="letter-spacing:-0.12px">0</span></div>
</div>
<div class="r o" style="top:163px">
<div class="c r_" style="left:0px;width:72px;"><span style="letter-spacing:-0.12px">9</span></div>
<div class="c l" style="left:72px;width:66px;"><span style="letter-spacing:-0.12px">2221</span></div>
<div class="c l" style="left:138px;width:416px;padding-left:1.4px;"><span style="letter-spacing:-0.58px">PRATO</span> <span style="letter-spacing:-0.89px">REDONDO</span> <span style="letter-spacing:-0.67px">TERRACOTA</span> <span style="letter-spacing:-0.12px">13</span> <span style="letter-spacing:-0.67px;margin-left:-0.67px">X</span> <span style="letter-spacing:-0.12px">13</span> <span style="letter-spacing:-0.67px;margin-left:-0.67px">X</span> <span style="letter-spacing:0.23px">1,5</span></div>
<div class="c r_" style="left:554px;width:64px;"><span style="letter-spacing:-0.12px">48</span></div>
<div class="c r_" style="left:618px;width:72px;"><span style="letter-spacing:0.06px">0,6400</span></div>
<div class="c r_" style="left:690px;width:46px;"><span style="letter-spacing:0.14px">0,00</span></div>
<div class="c r_" style="left:736px;width:46px;"><span style="letter-spacing:-0.12px">0</span></div>
<div class="c r_" style="left:782px;width:46px;"><span style="letter-spacing:-0.12px">0</span></div>
<div class="c r_" style="left:828px;width:71px;"><span style="letter-spacing:0.06px">0,6400</span></div>
<div class="c r_" style="left:899px;width:58px;"><span style="letter-spacing:0.14px">0,00</span></div>
<div class="c r_" style="left:957px;width:58px;"><span style="letter-spacing:0.14px">0,00</span></div>
<div class="c r_" style="left:1015px;width:58px;"><span style="letter-spacing:0.14px">0,00</span></div>
<div class="c r_" style="left:1073px;width:58px;"><span style="letter-spacing:0.14px">0,00</span></div>
<div class="c r_" style="left:1131px;width:56px;"><span style="letter-spacing:0.14px">1,40</span></div>
<div class="c r_" style="left:1187px;width:75px;"><span style="letter-spacing:0.09px">30,72</span></div>
<div class="c r_" style="left:1262px;width:72px;"><span style="letter-spacing:0.14px">0,00</span></div>
<div class="c r_" style="left:1334px;width:32px;"><span style="letter-spacing:-0.12px">6101</span></div>
<div class="c r_" style="left:1366px;width:58px;"><span style="letter-spacing:0.09px">21,50</span></div>
<div class="c l" style="left:1424px;width:310px;padding-left:2px;"><span style="letter-spacing:-0.12px">1786</span> <span style="letter-spacing:0.16px;margin-left:0.16px">-</span> <span style="letter-spacing:-0.73px">TABELA</span> <span style="letter-spacing:-1.14px">DE</span> <span style="letter-spacing:-1.08px">PREÇOS</span> <span style="letter-spacing:-0.89px">COM</span> <span style="letter-spacing:-0.72px">DESC.</span> <span style="letter-spacing:0.32px">10%</span> <span style="letter-spacing:0.03px">08/2024</span></div>
<div class="c l" style="left:1734px;width:67px;"><span style="letter-spacing:-0.12px">39249000</span></div>
<div class="c r_" style="left:1801px;width:40px;"><span style="letter-spacing:-0.12px">0</span></div>
</div>
<div class="r e" style="top:181px">
<div class="c r_" style="left:0px;width:72px;"><span style="letter-spacing:-0.12px">10</span></div>
<div class="c l" style="left:72px;width:66px;"><span style="letter-spacing:-0.12px">2220</span></div>
<div class="c l" style="left:138px;width:416px;padding-left:1.4px;"><span style="letter-spacing:-0.58px">PRATO</span> <span style="letter-spacing:-0.89px">REDONDO</span> <span style="letter-spacing:-0.67px">TERRACOTA</span> <span style="letter-spacing:-0.12px">10</span> <span style="letter-spacing:-0.67px;margin-left:-0.67px">X</span> <span style="letter-spacing:-0.12px">10</span> <span style="letter-spacing:-0.67px;margin-left:-0.67px">X</span> <span style="letter-spacing:-0.12px">1</span></div>
<div class="c r_" style="left:554px;width:64px;"><span style="letter-spacing:-0.12px">48</span></div>
<div class="c r_" style="left:618px;width:72px;"><span style="letter-spacing:0.06px">0,3300</span></div>
<div class="c r_" style="left:690px;width:46px;"><span style="letter-spacing:0.14px">0,00</span></div>
<div class="c r_" style="left:736px;width:46px;"><span style="letter-spacing:-0.12px">0</span></div>
<div class="c r_" style="left:782px;width:46px;"><span style="letter-spacing:-0.12px">0</span></div>
<div class="c r_" style="left:828px;width:71px;"><span style="letter-spacing:0.06px">0,3300</span></div>
<div class="c r_" style="left:899px;width:58px;"><span style="letter-spacing:0.14px">0,00</span></div>
<div class="c r_" style="left:957px;width:58px;"><span style="letter-spacing:0.14px">0,00</span></div>
<div class="c r_" style="left:1015px;width:58px;"><span style="letter-spacing:0.14px">0,00</span></div>
<div class="c r_" style="left:1073px;width:58px;"><span style="letter-spacing:0.14px">0,00</span></div>
<div class="c r_" style="left:1131px;width:56px;"><span style="letter-spacing:0.14px">0,72</span></div>
<div class="c r_" style="left:1187px;width:75px;"><span style="letter-spacing:0.09px">15,84</span></div>
<div class="c r_" style="left:1262px;width:72px;"><span style="letter-spacing:0.14px">0,00</span></div>
<div class="c r_" style="left:1334px;width:32px;"><span style="letter-spacing:-0.12px">6101</span></div>
<div class="c r_" style="left:1366px;width:58px;"><span style="letter-spacing:0.26px">11,09</span></div>
<div class="c l" style="left:1424px;width:310px;padding-left:2px;"><span style="letter-spacing:-0.12px">1786</span> <span style="letter-spacing:0.16px;margin-left:0.16px">-</span> <span style="letter-spacing:-0.73px">TABELA</span> <span style="letter-spacing:-1.14px">DE</span> <span style="letter-spacing:-1.08px">PREÇOS</span> <span style="letter-spacing:-0.89px">COM</span> <span style="letter-spacing:-0.72px">DESC.</span> <span style="letter-spacing:0.32px">10%</span> <span style="letter-spacing:0.03px">08/2024</span></div>
<div class="c l" style="left:1734px;width:67px;"><span style="letter-spacing:-0.12px">39249000</span></div>
<div class="c r_" style="left:1801px;width:40px;"><span style="letter-spacing:-0.12px">0</span></div>
</div>
<div class="r o" style="top:199px">
<div class="c r_" style="left:0px;width:72px;"><span style="letter-spacing:0.29px">11</span></div>
<div class="c l" style="left:72px;width:66px;"><span style="letter-spacing:-0.12px">2217</span></div>
<div class="c l" style="left:138px;width:416px;padding-left:1.4px;"><span style="letter-spacing:-0.58px">PRATO</span> <span style="letter-spacing:-0.89px">REDONDO</span> <span style="letter-spacing:-0.94px">PRETO</span>  <span style="letter-spacing:-0.12px">19</span> <span style="letter-spacing:0.25px;margin-left:0.25px">x</span> <span style="letter-spacing:-0.12px">19</span> <span style="letter-spacing:0.25px;margin-left:0.25px">x</span> <span style="letter-spacing:0.23px">1,5</span></div>
<div class="c r_" style="left:554px;width:64px;"><span style="letter-spacing:-0.12px">48</span></div>
<div class="c r_" style="left:618px;width:72px;"><span style="letter-spacing:0.06px">1,2000</span></div>
<div class="c r_" style="left:690px;width:46px;"><span style="letter-spacing:0.14px">0,00</span></div>
<div class="c r_" style="left:736px;width:46px;"><span style="letter-spacing:-0.12px">0</span></div>
<div class="c r_" style="left:782px;width:46px;"><span style="letter-spacing:-0.12px">0</span></div>
<div class="c r_" style="left:828px;width:71px;"><span style="letter-spacing:0.06px">1,2000</span></div>
<div class="c r_" style="left:899px;width:58px;"><span style="letter-spacing:0.14px">0,00</span></div>
<div class="c r_" style="left:957px;width:58px;"><span style="letter-spacing:0.14px">0,00</span></div>
<div class="c r_" style="left:1015px;width:58px;"><span style="letter-spacing:0.14px">0,00</span></div>
<div class="c r_" style="left:1073px;width:58px;"><span style="letter-spacing:0.14px">0,00</span></div>
<div class="c r_" style="left:1131px;width:56px;"><span style="letter-spacing:0.14px">2,62</span></div>
<div class="c r_" style="left:1187px;width:75px;"><span style="letter-spacing:0.09px">57,60</span></div>
<div class="c r_" style="left:1262px;width:72px;"><span style="letter-spacing:0.14px">0,00</span></div>
<div class="c r_" style="left:1334px;width:32px;"><span style="letter-spacing:-0.12px">6101</span></div>
<div class="c r_" style="left:1366px;width:58px;"><span style="letter-spacing:0.09px">40,32</span></div>
<div class="c l" style="left:1424px;width:310px;padding-left:2px;"><span style="letter-spacing:-0.12px">1786</span> <span style="letter-spacing:0.16px;margin-left:0.16px">-</span> <span style="letter-spacing:-0.73px">TABELA</span> <span style="letter-spacing:-1.14px">DE</span> <span style="letter-spacing:-1.08px">PREÇOS</span> <span style="letter-spacing:-0.89px">COM</span> <span style="letter-spacing:-0.72px">DESC.</span> <span style="letter-spacing:0.32px">10%</span> <span style="letter-spacing:0.03px">08/2024</span></div>
<div class="c l" style="left:1734px;width:67px;"><span style="letter-spacing:-0.12px">39249000</span></div>
<div class="c r_" style="left:1801px;width:40px;"><span style="letter-spacing:-0.12px">0</span></div>
</div>
<div class="r e" style="top:217px">
<div class="c r_" style="left:0px;width:72px;"><span style="letter-spacing:-0.12px">12</span></div>
<div class="c l" style="left:72px;width:66px;"><span style="letter-spacing:-0.12px">2215</span></div>
<div class="c l" style="left:138px;width:416px;padding-left:1.4px;"><span style="letter-spacing:-0.58px">PRATO</span> <span style="letter-spacing:-0.89px">REDONDO</span> <span style="letter-spacing:-0.94px">PRETO</span> <span style="letter-spacing:-0.12px">16</span> <span style="letter-spacing:-0.67px;margin-left:-0.67px">X</span> <span style="letter-spacing:-0.12px">16</span> <span style="letter-spacing:-0.67px;margin-left:-0.67px">X</span> <span style="letter-spacing:0.23px">1,5</span></div>
<div class="c r_" style="left:554px;width:64px;"><span style="letter-spacing:-0.12px">48</span></div>
<div class="c r_" style="left:618px;width:72px;"><span style="letter-spacing:0.06px">0,8100</span></div>
<div class="c r_" style="left:690px;width:46px;"><span style="letter-spacing:0.14px">0,00</span></div>
<div class="c r_" style="left:736px;width:46px;"><span style="letter-spacing:-0.12px">0</span></div>
<div class="c r_" style="left:782px;width:46px;"><span style="letter-spacing:-0.12px">0</span></div>
<div class="c r_" style="left:828px;width:71px;"><span style="letter-spacing:0.06px">0,8100</span></div>
<div class="c r_" style="left:899px;width:58px;"><span style="letter-spacing:0.14px">0,00</span></div>
<div class="c r_" style="left:957px;width:58px;"><span style="letter-spacing:0.14px">0,00</span></div>
<div class="c r_" style="left:1015px;width:58px;"><span style="letter-spacing:0.14px">0,00</span></div>
<div class="c r_" style="left:1073px;width:58px;"><span style="letter-spacing:0.14px">0,00</span></div>
<div class="c r_" style="left:1131px;width:56px;"><span style="letter-spacing:0.14px">1,77</span></div>
<div class="c r_" style="left:1187px;width:75px;"><span style="letter-spacing:0.09px">38,88</span></div>
<div class="c r_" style="left:1262px;width:72px;"><span style="letter-spacing:0.14px">0,00</span></div>
<div class="c r_" style="left:1334px;width:32px;"><span style="letter-spacing:-0.12px">6101</span></div>
<div class="c r_" style="left:1366px;width:58px;"><span style="letter-spacing:0.09px">27,22</span></div>
<div class="c l" style="left:1424px;width:310px;padding-left:2px;"><span style="letter-spacing:-0.12px">1786</span> <span style="letter-spacing:0.16px;margin-left:0.16px">-</span> <span style="letter-spacing:-0.73px">TABELA</span> <span style="letter-spacing:-1.14px">DE</span> <span style="letter-spacing:-1.08px">PREÇOS</span> <span style="letter-spacing:-0.89px">COM</span> <span style="letter-spacing:-0.72px">DESC.</span> <span style="letter-spacing:0.32px">10%</span> <span style="letter-spacing:0.03px">08/2024</span></div>
<div class="c l" style="left:1734px;width:67px;"><span style="letter-spacing:-0.12px">39249000</span></div>
<div class="c r_" style="left:1801px;width:40px;"><span style="letter-spacing:-0.12px">0</span></div>
</div>
<div class="r o" style="top:235px">
<div class="c r_" style="left:0px;width:72px;"><span style="letter-spacing:-0.12px">13</span></div>
<div class="c l" style="left:72px;width:66px;"><span style="letter-spacing:-0.12px">2214</span></div>
<div class="c l" style="left:138px;width:416px;padding-left:1.4px;"><span style="letter-spacing:-0.58px">PRATO</span> <span style="letter-spacing:-0.89px">REDONDO</span> <span style="letter-spacing:-0.94px">PRETO</span> <span style="letter-spacing:-0.12px">13</span> <span style="letter-spacing:-0.67px;margin-left:-0.67px">X</span> <span style="letter-spacing:-0.12px">13</span> <span style="letter-spacing:-0.67px;margin-left:-0.67px">X</span> <span style="letter-spacing:0.23px">1,5</span></div>
<div class="c r_" style="left:554px;width:64px;"><span style="letter-spacing:-0.12px">48</span></div>
<div class="c r_" style="left:618px;width:72px;"><span style="letter-spacing:0.06px">0,4800</span></div>
<div class="c r_" style="left:690px;width:46px;"><span style="letter-spacing:0.14px">0,00</span></div>
<div class="c r_" style="left:736px;width:46px;"><span style="letter-spacing:-0.12px">0</span></div>
<div class="c r_" style="left:782px;width:46px;"><span style="letter-spacing:-0.12px">0</span></div>
<div class="c r_" style="left:828px;width:71px;"><span style="letter-spacing:0.06px">0,4800</span></div>
<div class="c r_" style="left:899px;width:58px;"><span style="letter-spacing:0.14px">0,00</span></div>
<div class="c r_" style="left:957px;width:58px;"><span style="letter-spacing:0.14px">0,00</span></div>
<div class="c r_" style="left:1015px;width:58px;"><span style="letter-spacing:0.14px">0,00</span></div>
<div class="c r_" style="left:1073px;width:58px;"><span style="letter-spacing:0.14px">0,00</span></div>
<div class="c r_" style="left:1131px;width:56px;"><span style="letter-spacing:0.14px">1,05</span></div>
<div class="c r_" style="left:1187px;width:75px;"><span style="letter-spacing:0.09px">23,04</span></div>
<div class="c r_" style="left:1262px;width:72px;"><span style="letter-spacing:0.14px">0,00</span></div>
<div class="c r_" style="left:1334px;width:32px;"><span style="letter-spacing:-0.12px">6101</span></div>
<div class="c r_" style="left:1366px;width:58px;"><span style="letter-spacing:0.09px">16,13</span></div>
<div class="c l" style="left:1424px;width:310px;padding-left:2px;"><span style="letter-spacing:-0.12px">1786</span> <span style="letter-spacing:0.16px;margin-left:0.16px">-</span> <span style="letter-spacing:-0.73px">TABELA</span> <span style="letter-spacing:-1.14px">DE</span> <span style="letter-spacing:-1.08px">PREÇOS</span> <span style="letter-spacing:-0.89px">COM</span> <span style="letter-spacing:-0.72px">DESC.</span> <span style="letter-spacing:0.32px">10%</span> <span style="letter-spacing:0.03px">08/2024</span></div>
<div class="c l" style="left:1734px;width:67px;"><span style="letter-spacing:-0.12px">39249000</span></div>
<div class="c r_" style="left:1801px;width:40px;"><span style="letter-spacing:-0.12px">0</span></div>
</div>
<div class="r e" style="top:253px">
<div class="c r_" style="left:0px;width:72px;"><span style="letter-spacing:-0.12px">14</span></div>
<div class="c l" style="left:72px;width:66px;"><span style="letter-spacing:-0.12px">2210</span></div>
<div class="c l" style="left:138px;width:416px;padding-left:1.4px;"><span style="letter-spacing:-0.58px">PRATO</span> <span style="letter-spacing:-0.89px">REDONDO</span> <span style="letter-spacing:-0.94px">PRETO</span> <span style="letter-spacing:-0.12px">10</span> <span style="letter-spacing:-0.67px;margin-left:-0.67px">X</span> <span style="letter-spacing:-0.12px">10</span> <span style="letter-spacing:-0.67px;margin-left:-0.67px">X</span> <span style="letter-spacing:-0.12px">1</span></div>
<div class="c r_" style="left:554px;width:64px;"><span style="letter-spacing:-0.12px">48</span></div>
<div class="c r_" style="left:618px;width:72px;"><span style="letter-spacing:0.06px">0,2500</span></div>
<div class="c r_" style="left:690px;width:46px;"><span style="letter-spacing:0.14px">0,00</span></div>
<div class="c r_" style="left:736px;width:46px;"><span style="letter-spacing:-0.12px">0</span></div>
<div class="c r_" style="left:782px;width:46px;"><span style="letter-spacing:-0.12px">0</span></div>
<div class="c r_" style="left:828px;width:71px;"><span style="letter-spacing:0.06px">0,2500</span></div>
<div class="c r_" style="left:899px;width:58px;"><span style="letter-spacing:0.14px">0,00</span></div>
<div class="c r_" style="left:957px;width:58px;"><span style="letter-spacing:0.14px">0,00</span></div>
<div class="c r_" style="left:1015px;width:58px;"><span style="letter-spacing:0.14px">0,00</span></div>
<div class="c r_" style="left:1073px;width:58px;"><span style="letter-spacing:0.14px">0,00</span></div>
<div class="c r_" style="left:1131px;width:56px;"><span style="letter-spacing:0.14px">0,55</span></div>
<div class="c r_" style="left:1187px;width:75px;"><span style="letter-spacing:0.09px">12,00</span></div>
<div class="c r_" style="left:1262px;width:72px;"><span style="letter-spacing:0.14px">0,00</span></div>
<div class="c r_" style="left:1334px;width:32px;"><span style="letter-spacing:-0.12px">6101</span></div>
<div class="c r_" style="left:1366px;width:58px;"><span style="letter-spacing:0.14px">8,40</span></div>
<div class="c l" style="left:1424px;width:310px;padding-left:2px;"><span style="letter-spacing:-0.12px">1786</span> <span style="letter-spacing:0.16px;margin-left:0.16px">-</span> <span style="letter-spacing:-0.73px">TABELA</span> <span style="letter-spacing:-1.14px">DE</span> <span style="letter-spacing:-1.08px">PREÇOS</span> <span style="letter-spacing:-0.89px">COM</span> <span style="letter-spacing:-0.72px">DESC.</span> <span style="letter-spacing:0.32px">10%</span> <span style="letter-spacing:0.03px">08/2024</span></div>
<div class="c l" style="left:1734px;width:67px;"><span style="letter-spacing:-0.12px">39249000</span></div>
<div class="c r_" style="left:1801px;width:40px;"><span style="letter-spacing:-0.12px">0</span></div>
</div>
<div class="r o" style="top:271px">
<div class="c r_" style="left:0px;width:72px;"><span style="letter-spacing:-0.12px">15</span></div>
<div class="c l" style="left:72px;width:66px;"><span style="letter-spacing:-0.12px">77</span></div>
<div class="c l" style="left:138px;width:416px;padding-left:1.4px;"><span style="letter-spacing:-0.58px">PORTA</span> <span style="letter-spacing:-0.82px">ESCOVA/CREME</span> <span style="letter-spacing:-0.77px">DENTAL</span> <span style="letter-spacing:-0.32px">C/TAMPA</span> <span style="letter-spacing:-0.41px">TRANSP.C/MIOLO</span> <span style="letter-spacing:-0.59px">COLORIDO</span></div>
<div class="c r_" style="left:554px;width:64px;"><span style="letter-spacing:-0.12px">120</span></div>
<div class="c r_" style="left:618px;width:72px;"><span style="letter-spacing:0.06px">4,6300</span></div>
<div class="c r_" style="left:690px;width:46px;"><span style="letter-spacing:0.14px">0,00</span></div>
<div class="c r_" style="left:736px;width:46px;"><span style="letter-spacing:-0.12px">0</span></div>
<div class="c r_" style="left:782px;width:46px;"><span style="letter-spacing:-0.12px">0</span></div>
<div class="c r_" style="left:828px;width:71px;"><span style="letter-spacing:0.06px">4,6300</span></div>
<div class="c r_" style="left:899px;width:58px;"><span style="letter-spacing:0.14px">0,00</span></div>
<div class="c r_" style="left:957px;width:58px;"><span style="letter-spacing:0.14px">0,00</span></div>
<div class="c r_" style="left:1015px;width:58px;"><span style="letter-spacing:0.14px">0,00</span></div>
<div class="c r_" style="left:1073px;width:58px;"><span style="letter-spacing:0.14px">0,00</span></div>
<div class="c r_" style="left:1131px;width:56px;"><span style="letter-spacing:0.09px">25,28</span></div>
<div class="c r_" style="left:1187px;width:75px;"><span style="letter-spacing:0.06px">555,60</span></div>
<div class="c r_" style="left:1262px;width:72px;"><span style="letter-spacing:0.14px">0,00</span></div>
<div class="c r_" style="left:1334px;width:32px;"><span style="letter-spacing:-0.12px">6101</span></div>
<div class="c r_" style="left:1366px;width:58px;"><span style="letter-spacing:0.06px">388,92</span></div>
<div class="c l" style="left:1424px;width:310px;padding-left:2px;"><span style="letter-spacing:-0.12px">1786</span> <span style="letter-spacing:0.16px;margin-left:0.16px">-</span> <span style="letter-spacing:-0.73px">TABELA</span> <span style="letter-spacing:-1.14px">DE</span> <span style="letter-spacing:-1.08px">PREÇOS</span> <span style="letter-spacing:-0.89px">COM</span> <span style="letter-spacing:-0.72px">DESC.</span> <span style="letter-spacing:0.32px">10%</span> <span style="letter-spacing:0.03px">08/2024</span></div>
<div class="c l" style="left:1734px;width:67px;"><span style="letter-spacing:-0.12px">39249000</span></div>
<div class="c r_" style="left:1801px;width:40px;"><span style="letter-spacing:-0.12px">0</span></div>
</div>
<div class="r e" style="top:289px">
<div class="c r_" style="left:0px;width:72px;"><span style="letter-spacing:-0.12px">16</span></div>
<div class="c l" style="left:72px;width:66px;"><span style="letter-spacing:-0.12px">935</span></div>
<div class="c l" style="left:138px;width:416px;padding-left:1.4px;"><span style="letter-spacing:-0.99px">POTE</span> <span style="letter-spacing:-0.84px">RETANGULAR</span> <span style="letter-spacing:-0.12px">240</span> <span style="letter-spacing:-1.14px">ML</span></div>
<div class="c r_" style="left:554px;width:64px;"><span style="letter-spacing:-0.12px">108</span></div>
<div class="c r_" style="left:618px;width:72px;"><span style="letter-spacing:0.06px">0,7000</span></div>
<div class="c r_" style="left:690px;width:46px;"><span style="letter-spacing:0.14px">0,00</span></div>
<div class="c r_" style="left:736px;width:46px;"><span style="letter-spacing:-0.12px">0</span></div>
<div class="c r_" style="left:782px;width:46px;"><span style="letter-spacing:-0.12px">0</span></div>
<div class="c r_" style="left:828px;width:71px;"><span style="letter-spacing:0.06px">0,7000</span></div>
<div class="c r_" style="left:899px;width:58px;"><span style="letter-spacing:0.14px">0,00</span></div>
<div class="c r_" style="left:957px;width:58px;"><span style="letter-spacing:0.14px">0,00</span></div>
<div class="c r_" style="left:1015px;width:58px;"><span style="letter-spacing:0.14px">0,00</span></div>
<div class="c r_" style="left:1073px;width:58px;"><span style="letter-spacing:0.14px">0,00</span></div>
<div class="c r_" style="left:1131px;width:56px;"><span style="letter-spacing:0.14px">3,44</span></div>
<div class="c r_" style="left:1187px;width:75px;"><span style="letter-spacing:0.09px">75,60</span></div>
<div class="c r_" style="left:1262px;width:72px;"><span style="letter-spacing:0.14px">0,00</span></div>
<div class="c r_" style="left:1334px;width:32px;"><span style="letter-spacing:-0.12px">6101</span></div>
<div class="c r_" style="left:1366px;width:58px;"><span style="letter-spacing:0.09px">52,92</span></div>
<div class="c l" style="left:1424px;width:310px;padding-left:2px;"><span style="letter-spacing:-0.12px">1786</span> <span style="letter-spacing:0.16px;margin-left:0.16px">-</span> <span style="letter-spacing:-0.73px">TABELA</span> <span style="letter-spacing:-1.14px">DE</span> <span style="letter-spacing:-1.08px">PREÇOS</span> <span style="letter-spacing:-0.89px">COM</span> <span style="letter-spacing:-0.72px">DESC.</span> <span style="letter-spacing:0.32px">10%</span> <span style="letter-spacing:0.03px">08/2024</span></div>
<div class="c l" style="left:1734px;width:67px;"><span style="letter-spacing:-0.12px">39241000</span></div>
<div class="c r_" style="left:1801px;width:40px;"><span style="letter-spacing:-0.12px">0</span></div>
</div>
<div class="r o" style="top:307px">
<div class="c r_" style="left:0px;width:72px;"><span style="letter-spacing:-0.12px">17</span></div>
<div class="c l" style="left:72px;width:66px;"><span style="letter-spacing:-0.12px">1439</span></div>
<div class="c l" style="left:138px;width:416px;padding-left:1.4px;"><span style="letter-spacing:-0.55px">CONTAINER</span> <span style="letter-spacing:-0.67px">VERSATIL</span> <span style="letter-spacing:-0.84px">RETANGULAR</span> <span style="letter-spacing:-0.53px">BAIXO</span> <span style="letter-spacing:0.23px">2,8</span> <span style="letter-spacing:-0.56px;margin-left:-0.56px">L</span> <span style="letter-spacing:-0.47px">TRANSP.</span></div>
<div class="c r_" style="left:554px;width:64px;"><span style="letter-spacing:-0.12px">48</span></div>
<div class="c r_" style="left:618px;width:72px;"><span style="letter-spacing:0.06px">4,6000</span></div>
<div class="c r_" style="left:690px;width:46px;"><span style="letter-spacing:0.14px">0,00</span></div>
<div class="c r_" style="left:736px;width:46px;"><span style="letter-spacing:-0.12px">0</span></div>
<div class="c r_" style="left:782px;width:46px;"><span style="letter-spacing:-0.12px">0</span></div>
<div class="c r_" style="left:828px;width:71px;"><span style="letter-spacing:0.06px">4,6000</span></div>
<div class="c r_" style="left:899px;width:58px;"><span style="letter-spacing:0.14px">0,00</span></div>
<div class="c r_" style="left:957px;width:58px;"><span style="letter-spacing:0.14px">0,00</span></div>
<div class="c r_" style="left:1015px;width:58px;"><span style="letter-spacing:0.14px">0,00</span></div>
<div class="c r_" style="left:1073px;width:58px;"><span style="letter-spacing:0.14px">0,00</span></div>
<div class="c r_" style="left:1131px;width:56px;"><span style="letter-spacing:0.09px">10,05</span></div>
<div class="c r_" style="left:1187px;width:75px;"><span style="letter-spacing:0.06px">220,80</span></div>
<div class="c r_" style="left:1262px;width:72px;"><span style="letter-spacing:0.14px">0,00</span></div>
<div class="c r_" style="left:1334px;width:32px;"><span style="letter-spacing:-0.12px">6101</span></div>
<div class="c r_" style="left:1366px;width:58px;"><span style="letter-spacing:0.06px">154,56</span></div>
<div class="c l" style="left:1424px;width:310px;padding-left:2px;"><span style="letter-spacing:-0.12px">1786</span> <span style="letter-spacing:0.16px;margin-left:0.16px">-</span> <span style="letter-spacing:-0.73px">TABELA</span> <span style="letter-spacing:-1.14px">DE</span> <span style="letter-spacing:-1.08px">PREÇOS</span> <span style="letter-spacing:-0.89px">COM</span> <span style="letter-spacing:-0.72px">DESC.</span> <span style="letter-spacing:0.32px">10%</span> <span style="letter-spacing:0.03px">08/2024</span></div>
<div class="c l" style="left:1734px;width:67px;"><span style="letter-spacing:-0.12px">39249000</span></div>
<div class="c r_" style="left:1801px;width:40px;"><span style="letter-spacing:-0.12px">0</span></div>
</div>
<div class="r e" style="top:325px">
<div class="c r_" style="left:0px;width:72px;"><span style="letter-spacing:-0.12px">18</span></div>
<div class="c l" style="left:72px;width:66px;"><span style="letter-spacing:-0.12px">1437</span></div>
<div class="c l" style="left:138px;width:416px;padding-left:1.4px;"><span style="letter-spacing:-0.55px">CONTAINER</span> <span style="letter-spacing:-0.67px">VERSATIL</span> <span style="letter-spacing:-0.53px">RETANG.3</span> <span style="letter-spacing:-0.40px">DIVISORIAS</span> <span style="letter-spacing:0.23px">1,8</span> <span style="letter-spacing:-0.56px;margin-left:-0.56px">L</span> <span style="letter-spacing:-0.47px">TRANSP.</span></div>
<div class="c r_" style="left:554px;width:64px;"><span style="letter-spacing:-0.12px">72</span></div>
<div class="c r_" style="left:618px;width:72px;"><span style="letter-spacing:0.06px">5,8600</span></div>
<div class="c r_" style="left:690px;width:46px;"><span style="letter-spacing:0.14px">0,00</span></div>
<div class="c r_" style="left:736px;width:46px;"><span style="letter-spacing:-0.12px">0</span></div>
<div class="c r_" style="left:782px;width:46px;"><span style="letter-spacing:-0.12px">0</span></div>
<div class="c r_" style="left:828px;width:71px;"><span style="letter-spacing:0.06px">5,8600</span></div>
<div class="c r_" style="left:899px;width:58px;"><span style="letter-spacing:0.14px">0,00</span></div>
<div class="c r_" style="left:957px;width:58px;"><span style="letter-spacing:0.14px">0,00</span></div>
<div class="c r_" style="left:1015px;width:58px;"><span style="letter-spacing:0.14px">0,00</span></div>
<div class="c r_" style="left:1073px;width:58px;"><span style="letter-spacing:0.14px">0,00</span></div>
<div class="c r_" style="left:1131px;width:56px;"><span style="letter-spacing:0.09px">19,20</span></div>
<div class="c r_" style="left:1187px;width:75px;"><span style="letter-spacing:0.06px">421,92</span></div>
<div class="c r_" style="left:1262px;width:72px;"><span style="letter-spacing:0.14px">0,00</span></div>
<div class="c r_" style="left:1334px;width:32px;"><span style="letter-spacing:-0.12px">6101</span></div>
<div class="c r_" style="left:1366px;width:58px;"><span style="letter-spacing:0.06px">295,34</span></div>
<div class="c l" style="left:1424px;width:310px;padding-left:2px;"><span style="letter-spacing:-0.12px">1786</span> <span style="letter-spacing:0.16px;margin-left:0.16px">-</span> <span style="letter-spacing:-0.73px">TABELA</span> <span style="letter-spacing:-1.14px">DE</span> <span style="letter-spacing:-1.08px">PREÇOS</span> <span style="letter-spacing:-0.89px">COM</span> <span style="letter-spacing:-0.72px">DESC.</span> <span style="letter-spacing:0.32px">10%</span> <span style="letter-spacing:0.03px">08/2024</span></div>
<div class="c l" style="left:1734px;width:67px;"><span style="letter-spacing:-0.12px">39249000</span></div>
<div class="c r_" style="left:1801px;width:40px;"><span style="letter-spacing:-0.12px">0</span></div>
</div>
<div class="r o" style="top:343px">
<div class="c r_" style="left:0px;width:72px;"><span style="letter-spacing:-0.12px">19</span></div>
<div class="c l" style="left:72px;width:66px;"><span style="letter-spacing:-0.12px">406</span></div>
<div class="c l" style="left:138px;width:416px;padding-left:1.4px;"><span style="letter-spacing:-0.64px">SALADEIRA</span> <span style="letter-spacing:0.23px">6,2</span> <span style="letter-spacing:-0.56px;margin-left:-0.56px">L</span></div>
<div class="c r_" style="left:554px;width:64px;"><span style="letter-spacing:-0.12px">24</span></div>
<div class="c r_" style="left:618px;width:72px;"><span style="letter-spacing:0.06px">6,3800</span></div>
<div class="c r_" style="left:690px;width:46px;"><span style="letter-spacing:0.14px">0,00</span></div>
<div class="c r_" style="left:736px;width:46px;"><span style="letter-spacing:-0.12px">0</span></div>
<div class="c r_" style="left:782px;width:46px;"><span style="letter-spacing:-0.12px">0</span></div>
<div class="c r_" style="left:828px;width:71px;"><span style="letter-spacing:0.06px">6,3800</span></div>
<div class="c r_" style="left:899px;width:58px;"><span style="letter-spacing:0.14px">0,00</span></div>
<div class="c r_" style="left:957px;width:58px;"><span style="letter-spacing:0.14px">0,00</span></div>
<div class="c r_" style="left:1015px;width:58px;"><span style="letter-spacing:0.14px">0,00</span></div>
<div class="c r_" style="left:1073px;width:58px;"><span style="letter-spacing:0.14px">0,00</span></div>
<div class="c r_" style="left:1131px;width:56px;"><span style="letter-spacing:0.14px">6,97</span></div>
<div class="c r_" style="left:1187px;width:75px;"><span style="letter-spacing:0.06px">153,12</span></div>
<div class="c r_" style="left:1262px;width:72px;"><span style="letter-spacing:0.14px">0,00</span></div>
<div class="c r_" style="left:1334px;width:32px;"><span style="letter-spacing:-0.12px">6101</span></div>
<div class="c r_" style="left:1366px;width:58px;"><span style="letter-spacing:0.06px">107,18</span></div>
<div class="c l" style="left:1424px;width:310px;padding-left:2px;"><span style="letter-spacing:-0.12px">1786</span> <span style="letter-spacing:0.16px;margin-left:0.16px">-</span> <span style="letter-spacing:-0.73px">TABELA</span> <span style="letter-spacing:-1.14px">DE</span> <span style="letter-spacing:-1.08px">PREÇOS</span> <span style="letter-spacing:-0.89px">COM</span> <span style="letter-spacing:-0.72px">DESC.</span> <span style="letter-spacing:0.32px">10%</span> <span style="letter-spacing:0.03px">08/2024</span></div>
<div class="c l" style="left:1734px;width:67px;"><span style="letter-spacing:-0.12px">39241000</span></div>
<div class="c r_" style="left:1801px;width:40px;"><span style="letter-spacing:-0.12px">0</span></div>
</div>
<div class="r e" style="top:361px">
<div class="c r_" style="left:0px;width:72px;"><span style="letter-spacing:-0.12px">20</span></div>
<div class="c l" style="left:72px;width:66px;"><span style="letter-spacing:-0.12px">424</span></div>
<div class="c l" style="left:138px;width:416px;padding-left:1.4px;"><span style="letter-spacing:-0.98px">ESCORREDOR</span> <span style="letter-spacing:-1.14px">DE</span> <span style="letter-spacing:-0.70px">PRATOS</span></div>
<div class="c r_" style="left:554px;width:64px;"><span style="letter-spacing:-0.12px">48</span></div>
<div class="c r_" style="left:618px;width:72px;"><span style="letter-spacing:0.06px">7,2900</span></div>
<div class="c r_" style="left:690px;width:46px;"><span style="letter-spacing:0.14px">0,00</span></div>
<div class="c r_" style="left:736px;width:46px;"><span style="letter-spacing:-0.12px">0</span></div>
<div class="c r_" style="left:782px;width:46px;"><span style="letter-spacing:-0.12px">0</span></div>
<div class="c r_" style="left:828px;width:71px;"><span style="letter-spacing:0.06px">7,2900</span></div>
<div class="c r_" style="left:899px;width:58px;"><span style="letter-spacing:0.14px">0,00</span></div>
<div class="c r_" style="left:957px;width:58px;"><span style="letter-spacing:0.14px">0,00</span></div>
<div class="c r_" style="left:1015px;width:58px;"><span style="letter-spacing:0.14px">0,00</span></div>
<div class="c r_" style="left:1073px;width:58px;"><span style="letter-spacing:0.14px">0,00</span></div>
<div class="c r_" style="left:1131px;width:56px;"><span style="letter-spacing:0.09px">15,92</span></div>
<div class="c r_" style="left:1187px;width:75px;"><span style="letter-spacing:0.06px">349,92</span></div>
<div class="c r_" style="left:1262px;width:72px;"><span style="letter-spacing:0.14px">0,00</span></div>
<div class="c r_" style="left:1334px;width:32px;"><span style="letter-spacing:-0.12px">6101</span></div>
<div class="c r_" style="left:1366px;width:58px;"><span style="letter-spacing:0.06px">244,94</span></div>
<div class="c l" style="left:1424px;width:310px;padding-left:2px;"><span style="letter-spacing:-0.12px">1786</span> <span style="letter-spacing:0.16px;margin-left:0.16px">-</span> <span style="letter-spacing:-0.73px">TABELA</span> <span style="letter-spacing:-1.14px">DE</span> <span style="letter-spacing:-1.08px">PREÇOS</span> <span style="letter-spacing:-0.89px">COM</span> <span style="letter-spacing:-0.72px">DESC.</span> <span style="letter-spacing:0.32px">10%</span> <span style="letter-spacing:0.03px">08/2024</span></div>
<div class="c l" style="left:1734px;width:67px;"><span style="letter-spacing:-0.12px">39241000</span></div>
<div class="c r_" style="left:1801px;width:40px;"><span style="letter-spacing:-0.12px">0</span></div>
</div>
<div class="r o" style="top:379px">
<div class="c r_" style="left:0px;width:72px;"><span style="letter-spacing:-0.12px">21</span></div>
<div class="c l" style="left:72px;width:66px;"><span style="letter-spacing:0.09px">1182</span></div>
<div class="c l" style="left:138px;width:416px;padding-left:1.4px;"><span style="letter-spacing:-0.85px">BOWL</span> <span style="letter-spacing:-1.00px">PEQUENO</span> <span style="letter-spacing:-0.32px">C/TAMPA</span> <span style="letter-spacing:-0.75px">HERMETICA</span> <span style="letter-spacing:-0.12px">800</span> <span style="letter-spacing:-1.14px">ML</span> <span style="letter-spacing:-0.87px">TRANSPARENTE</span></div>
<div class="c r_" style="left:554px;width:64px;"><span style="letter-spacing:-0.12px">72</span></div>
<div class="c r_" style="left:618px;width:72px;"><span style="letter-spacing:0.06px">2,8100</span></div>
<div class="c r_" style="left:690px;width:46px;"><span style="letter-spacing:0.14px">0,00</span></div>
<div class="c r_" style="left:736px;width:46px;"><span style="letter-spacing:-0.12px">0</span></div>
<div class="c r_" style="left:782px;width:46px;"><span style="letter-spacing:-0.12px">0</span></div>
<div class="c r_" style="left:828px;width:71px;"><span style="letter-spacing:0.06px">2,8100</span></div>
<div class="c r_" style="left:899px;width:58px;"><span style="letter-spacing:0.14px">0,00</span></div>
<div class="c r_" style="left:957px;width:58px;"><span style="letter-spacing:0.14px">0,00</span></div>
<div class="c r_" style="left:1015px;width:58px;"><span style="letter-spacing:0.14px">0,00</span></div>
<div class="c r_" style="left:1073px;width:58px;"><span style="letter-spacing:0.14px">0,00</span></div>
<div class="c r_" style="left:1131px;width:56px;"><span style="letter-spacing:0.14px">9,21</span></div>
<div class="c r_" style="left:1187px;width:75px;"><span style="letter-spacing:0.06px">202,32</span></div>
<div class="c r_" style="left:1262px;width:72px;"><span style="letter-spacing:0.14px">0,00</span></div>
<div class="c r_" style="left:1334px;width:32px;"><span style="letter-spacing:-0.12px">6101</span></div>
<div class="c r_" style="left:1366px;width:58px;"><span style="letter-spacing:0.06px">141,62</span></div>
<div class="c l" style="left:1424px;width:310px;padding-left:2px;"><span style="letter-spacing:-0.12px">1786</span> <span style="letter-spacing:0.16px;margin-left:0.16px">-</span> <span style="letter-spacing:-0.73px">TABELA</span> <span style="letter-spacing:-1.14px">DE</span> <span style="letter-spacing:-1.08px">PREÇOS</span> <span style="letter-spacing:-0.89px">COM</span> <span style="letter-spacing:-0.72px">DESC.</span> <span style="letter-spacing:0.32px">10%</span> <span style="letter-spacing:0.03px">08/2024</span></div>
<div class="c l" style="left:1734px;width:67px;"><span style="letter-spacing:-0.12px">39241000</span></div>
<div class="c r_" style="left:1801px;width:40px;"><span style="letter-spacing:-0.12px">0</span></div>
</div>
<div class="r e" style="top:397px">
<div class="c r_" style="left:0px;width:72px;"><span style="letter-spacing:-0.12px">22</span></div>
<div class="c l" style="left:72px;width:66px;"><span style="letter-spacing:0.09px">1181</span></div>
<div class="c l" style="left:138px;width:416px;padding-left:1.4px;"><span style="letter-spacing:-0.85px">BOWL</span> <span style="letter-spacing:-0.06px">MINI</span> <span style="letter-spacing:-0.32px">C/TAMPA</span> <span style="letter-spacing:-0.75px">HERMETICA</span> <span style="letter-spacing:-0.12px">350</span> <span style="letter-spacing:-1.14px">ML</span> <span style="letter-spacing:-0.87px">TRANSPARENTE</span></div>
<div class="c r_" style="left:554px;width:64px;"><span style="letter-spacing:-0.12px">72</span></div>
<div class="c r_" style="left:618px;width:72px;"><span style="letter-spacing:0.06px">1,7200</span></div>
<div class="c r_" style="left:690px;width:46px;"><span style="letter-spacing:0.14px">0,00</span></div>
<div class="c r_" style="left:736px;width:46px;"><span style="letter-spacing:-0.12px">0</span></div>
<div class="c r_" style="left:782px;width:46px;"><span style="letter-spacing:-0.12px">0</span></div>
<div class="c r_" style="left:828px;width:71px;"><span style="letter-spacing:0.06px">1,7200</span></div>
<div class="c r_" style="left:899px;width:58px;"><span style="letter-spacing:0.14px">0,00</span></div>
<div class="c r_" style="left:957px;width:58px;"><span style="letter-spacing:0.14px">0,00</span></div>
<div class="c r_" style="left:1015px;width:58px;"><span style="letter-spacing:0.14px">0,00</span></div>
<div class="c r_" style="left:1073px;width:58px;"><span style="letter-spacing:0.14px">0,00</span></div>
<div class="c r_" style="left:1131px;width:56px;"><span style="letter-spacing:0.14px">5,63</span></div>
<div class="c r_" style="left:1187px;width:75px;"><span style="letter-spacing:0.06px">123,84</span></div>
<div class="c r_" style="left:1262px;width:72px;"><span style="letter-spacing:0.14px">0,00</span></div>
<div class="c r_" style="left:1334px;width:32px;"><span style="letter-spacing:-0.12px">6101</span></div>
<div class="c r_" style="left:1366px;width:58px;"><span style="letter-spacing:0.09px">86,69</span></div>
<div class="c l" style="left:1424px;width:310px;padding-left:2px;"><span style="letter-spacing:-0.12px">1786</span> <span style="letter-spacing:0.16px;margin-left:0.16px">-</span> <span style="letter-spacing:-0.73px">TABELA</span> <span style="letter-spacing:-1.14px">DE</span> <span style="letter-spacing:-1.08px">PREÇOS</span> <span style="letter-spacing:-0.89px">COM</span> <span style="letter-spacing:-0.72px">DESC.</span> <span style="letter-spacing:0.32px">10%</span> <span style="letter-spacing:0.03px">08/2024</span></div>
<div class="c l" style="left:1734px;width:67px;"><span style="letter-spacing:-0.12px">39241000</span></div>
<div class="c r_" style="left:1801px;width:40px;"><span style="letter-spacing:-0.12px">0</span></div>
</div>
<div class="r o" style="top:415px">
<div class="c r_" style="left:0px;width:72px;"><span style="letter-spacing:-0.12px">23</span></div>
<div class="c l" style="left:72px;width:66px;"><span style="letter-spacing:0.09px">1124</span></div>
<div class="c l" style="left:138px;width:416px;padding-left:1.4px;"><span style="letter-spacing:-0.55px">CONTAINER</span> <span style="letter-spacing:-0.63px">ORGANIZADOR</span> <span style="letter-spacing:-0.53px">BAIXO</span> <span style="letter-spacing:-0.12px">3</span> <span style="letter-spacing:-0.56px;margin-left:-0.56px">L</span> <span style="letter-spacing:-0.87px">TRANSPARENTE</span></div>
<div class="c r_" style="left:554px;width:64px;"><span style="letter-spacing:-0.12px">72</span></div>
<div class="c r_" style="left:618px;width:72px;"><span style="letter-spacing:0.06px">5,2700</span></div>
<div class="c r_" style="left:690px;width:46px;"><span style="letter-spacing:0.14px">0,00</span></div>
<div class="c r_" style="left:736px;width:46px;"><span style="letter-spacing:-0.12px">0</span></div>
<div class="c r_" style="left:782px;width:46px;"><span style="letter-spacing:-0.12px">0</span></div>
<div class="c r_" style="left:828px;width:71px;"><span style="letter-spacing:0.06px">5,2700</span></div>
<div class="c r_" style="left:899px;width:58px;"><span style="letter-spacing:0.14px">0,00</span></div>
<div class="c r_" style="left:957px;width:58px;"><span style="letter-spacing:0.14px">0,00</span></div>
<div class="c r_" style="left:1015px;width:58px;"><span style="letter-spacing:0.14px">0,00</span></div>
<div class="c r_" style="left:1073px;width:58px;"><span style="letter-spacing:0.14px">0,00</span></div>
<div class="c r_" style="left:1131px;width:56px;"><span style="letter-spacing:0.09px">17,26</span></div>
<div class="c r_" style="left:1187px;width:75px;"><span style="letter-spacing:0.06px">379,44</span></div>
<div class="c r_" style="left:1262px;width:72px;"><span style="letter-spacing:0.14px">0,00</span></div>
<div class="c r_" style="left:1334px;width:32px;"><span style="letter-spacing:-0.12px">6101</span></div>
<div class="c r_" style="left:1366px;width:58px;"><span style="letter-spacing:0.06px">265,61</span></div>
<div class="c l" style="left:1424px;width:310px;padding-left:2px;"><span style="letter-spacing:-0.12px">1786</span> <span style="letter-spacing:0.16px;margin-left:0.16px">-</span> <span style="letter-spacing:-0.73px">TABELA</span> <span style="letter-spacing:-1.14px">DE</span> <span style="letter-spacing:-1.08px">PREÇOS</span> <span style="letter-spacing:-0.89px">COM</span> <span style="letter-spacing:-0.72px">DESC.</span> <span style="letter-spacing:0.32px">10%</span> <span style="letter-spacing:0.03px">08/2024</span></div>
<div class="c l" style="left:1734px;width:67px;"><span style="letter-spacing:-0.12px">39249000</span></div>
<div class="c r_" style="left:1801px;width:40px;"><span style="letter-spacing:-0.12px">0</span></div>
</div>
<div class="r e" style="top:433px">
<div class="c r_" style="left:0px;width:72px;"><span style="letter-spacing:-0.12px">24</span></div>
<div class="c l" style="left:72px;width:66px;"><span style="letter-spacing:0.09px">1123</span></div>
<div class="c l" style="left:138px;width:416px;padding-left:1.4px;"><span style="letter-spacing:-0.55px">CONTAINER</span> <span style="letter-spacing:-0.63px">ORGANIZADOR</span> <span style="letter-spacing:-0.53px">BAIXO</span> <span style="letter-spacing:-0.12px">6</span> <span style="letter-spacing:-0.56px;margin-left:-0.56px">L</span> <span style="letter-spacing:-0.87px">TRANSPARENTE</span></div>
<div class="c r_" style="left:554px;width:64px;"><span style="letter-spacing:-0.12px">72</span></div>
<div class="c r_" style="left:618px;width:72px;"><span style="letter-spacing:0.06px">9,1600</span></div>
<div class="c r_" style="left:690px;width:46px;"><span style="letter-spacing:0.14px">0,00</span></div>
<div class="c r_" style="left:736px;width:46px;"><span style="letter-spacing:-0.12px">0</span></div>
<div class="c r_" style="left:782px;width:46px;"><span style="letter-spacing:-0.12px">0</span></div>
<div class="c r_" style="left:828px;width:71px;"><span style="letter-spacing:0.06px">9,1600</span></div>
<div class="c r_" style="left:899px;width:58px;"><span style="letter-spacing:0.14px">0,00</span></div>
<div class="c r_" style="left:957px;width:58px;"><span style="letter-spacing:0.14px">0,00</span></div>
<div class="c r_" style="left:1015px;width:58px;"><span style="letter-spacing:0.14px">0,00</span></div>
<div class="c r_" style="left:1073px;width:58px;"><span style="letter-spacing:0.14px">0,00</span></div>
<div class="c r_" style="left:1131px;width:56px;"><span style="letter-spacing:0.09px">30,01</span></div>
<div class="c r_" style="left:1187px;width:75px;"><span style="letter-spacing:0.06px">659,52</span></div>
<div class="c r_" style="left:1262px;width:72px;"><span style="letter-spacing:0.14px">0,00</span></div>
<div class="c r_" style="left:1334px;width:32px;"><span style="letter-spacing:-0.12px">6101</span></div>
<div class="c r_" style="left:1366px;width:58px;"><span style="letter-spacing:0.06px">461,66</span></div>
<div class="c l" style="left:1424px;width:310px;padding-left:2px;"><span style="letter-spacing:-0.12px">1786</span> <span style="letter-spacing:0.16px;margin-left:0.16px">-</span> <span style="letter-spacing:-0.73px">TABELA</span> <span style="letter-spacing:-1.14px">DE</span> <span style="letter-spacing:-1.08px">PREÇOS</span> <span style="letter-spacing:-0.89px">COM</span> <span style="letter-spacing:-0.72px">DESC.</span> <span style="letter-spacing:0.32px">10%</span> <span style="letter-spacing:0.03px">08/2024</span></div>
<div class="c l" style="left:1734px;width:67px;"><span style="letter-spacing:-0.12px">39249000</span></div>
<div class="c r_" style="left:1801px;width:40px;"><span style="letter-spacing:-0.12px">0</span></div>
</div>
<div class="r o" style="top:451px">
<div class="c r_" style="left:0px;width:72px;"><span style="letter-spacing:-0.12px">25</span></div>
<div class="c l" style="left:72px;width:66px;"><span style="letter-spacing:0.09px">1100</span></div>
<div class="c l" style="left:138px;width:416px;padding-left:1.4px;"><span style="letter-spacing:-0.55px">CONTAINER</span> <span style="letter-spacing:-0.63px">ORGANIZADOR</span> <span style="letter-spacing:-0.53px">BAIXO</span> <span style="letter-spacing:-0.12px">10</span> <span style="letter-spacing:-0.56px;margin-left:-0.56px">L</span> <span style="letter-spacing:-0.87px">TRANSPARENTE</span></div>
<div class="c r_" style="left:554px;width:64px;"><span style="letter-spacing:-0.12px">36</span></div>
<div class="c r_" style="left:618px;width:72px;"><span style="letter-spacing:0.03px">13,6400</span></div>
<div class="c r_" style="left:690px;width:46px;"><span style="letter-spacing:0.14px">0,00</span></div>
<div class="c r_" style="left:736px;width:46px;"><span style="letter-spacing:-0.12px">0</span></div>
<div class="c r_" style="left:782px;width:46px;"><span style="letter-spacing:-0.12px">0</span></div>
<div class="c r_" style="left:828px;width:71px;"><span style="letter-spacing:0.03px">13,6400</span></div>
<div class="c r_" style="left:899px;width:58px;"><span style="letter-spacing:0.14px">0,00</span></div>
<div class="c r_" style="left:957px;width:58px;"><span style="letter-spacing:0.14px">0,00</span></div>
<div class="c r_" style="left:1015px;width:58px;"><span style="letter-spacing:0.14px">0,00</span></div>
<div class="c r_" style="left:1073px;width:58px;"><span style="letter-spacing:0.14px">0,00</span></div>
<div class="c r_" style="left:1131px;width:56px;"><span style="letter-spacing:0.09px">22,34</span></div>
<div class="c r_" style="left:1187px;width:75px;"><span style="letter-spacing:0.06px">491,04</span></div>
<div class="c r_" style="left:1262px;width:72px;"><span style="letter-spacing:0.14px">0,00</span></div>
<div class="c r_" style="left:1334px;width:32px;"><span style="letter-spacing:-0.12px">6101</span></div>
<div class="c r_" style="left:1366px;width:58px;"><span style="letter-spacing:0.06px">343,73</span></div>
<div class="c l" style="left:1424px;width:310px;padding-left:2px;"><span style="letter-spacing:-0.12px">1786</span> <span style="letter-spacing:0.16px;margin-left:0.16px">-</span> <span style="letter-spacing:-0.73px">TABELA</span> <span style="letter-spacing:-1.14px">DE</span> <span style="letter-spacing:-1.08px">PREÇOS</span> <span style="letter-spacing:-0.89px">COM</span> <span style="letter-spacing:-0.72px">DESC.</span> <span style="letter-spacing:0.32px">10%</span> <span style="letter-spacing:0.03px">08/2024</span></div>
<div class="c l" style="left:1734px;width:67px;"><span style="letter-spacing:-0.12px">39249000</span></div>
<div class="c r_" style="left:1801px;width:40px;"><span style="letter-spacing:-0.12px">0</span></div>
</div>
<div class="a" style="left:0;top:19px;width:71px;height:1px;background:repeating-linear-gradient(90deg,#000 0 1px,transparent 1px 2px)"></div>
<div class="a" style="left:0;top:35px;width:71px;height:1px;background:repeating-linear-gradient(90deg,#000 0 1px,transparent 1px 2px)"></div>
<div class="a" style="left:0;top:19px;width:1px;height:17px;background:repeating-linear-gradient(180deg,#000 0 1px,transparent 1px 2px)"></div>
<div class="a" style="left:72px;top:19px;width:1768px;height:1px;background:repeating-linear-gradient(90deg,#ce953a 0 1px,transparent 1px 2px)"></div>
<div class="a" style="left:72px;top:35px;width:1768px;height:1px;background:repeating-linear-gradient(90deg,#ce953a 0 1px,transparent 1px 2px)"></div>
<div class="a" style="left:1839px;top:19px;width:1px;height:17px;background:repeating-linear-gradient(180deg,#ce953a 0 1px,transparent 1px 2px)"></div>
</div>
<div class="a" style="left:3px;top:590px;width:1841px;height:28px;background:linear-gradient(#fafafa,#e6e6e6);border-top:1px solid #b2b2b2"></div>
<div class="a" style="left:1843px;top:590px;width:1px;height:28px;background:#b2b2b2"></div>
<div class="a" style="left:1844px;top:590px;width:5px;height:28px;background:#fff"></div>
<div class="ft" style="left:557px;width:63px"><span style="letter-spacing:0.09px">1.206</span></div>
<div class="ft" style="left:621px;width:71px"><span style="letter-spacing:0.01px">136,2400</span></div>
<div class="ft" style="left:693px;width:45px"><span style="letter-spacing:0.14px">0,00</span></div>
<div class="ft" style="left:739px;width:45px"><span style="letter-spacing:0.14px">0,00</span></div>
<div class="ft" style="left:785px;width:45px"><span style="letter-spacing:0.14px">0,00</span></div>
<div class="ft" style="left:831px;width:70px"><span style="letter-spacing:0.15px">1.906,59</span></div>
<div class="ft" style="left:902px;width:57px"><span style="letter-spacing:0.14px">0,00</span></div>
<div class="ft" style="left:960px;width:57px"><span style="letter-spacing:0.14px">0,00</span></div>
<div class="ft" style="left:1018px;width:57px"><span style="letter-spacing:0.14px">0,00</span></div>
<div class="ft" style="left:1076px;width:57px"><span style="letter-spacing:0.14px">0,00</span></div>
<div class="ft" style="left:1134px;width:55px"><span style="letter-spacing:0.06px">691,58</span></div>
<div class="ft" style="left:1190px;width:74px"><span style="letter-spacing:0.12px">15.199,44</span></div>
<div class="ft" style="left:1265px;width:71px"><span style="letter-spacing:0.14px">0,00</span></div>
<div class="ft" style="left:1369px;width:57px"><span style="letter-spacing:0.12px">10.639,60</span></div>
<div class="ft" style="left:1804px;width:38px"><span style="letter-spacing:0.14px">0,00</span></div>
<svg class="a" style="left:0;top:80px;mix-blend-mode:multiply" width="1849" height="40" viewBox="0 80 1849 40" shape-rendering="crispEdges"><g fill="#ffff00"><polygon points="622,90 642,90 642,92 650,92 652,93 656,94 693,94 693,105 692,105 692,110 623,110 623,102 622,102"/><polygon points="831,88 903,88 903,110 899,110 899,109 888,109 888,110 845,110 845,107 830,107 830,95 831,95"/><rect x="1425" y="94" width="34" height="12"/></g></svg>
</body></html>
